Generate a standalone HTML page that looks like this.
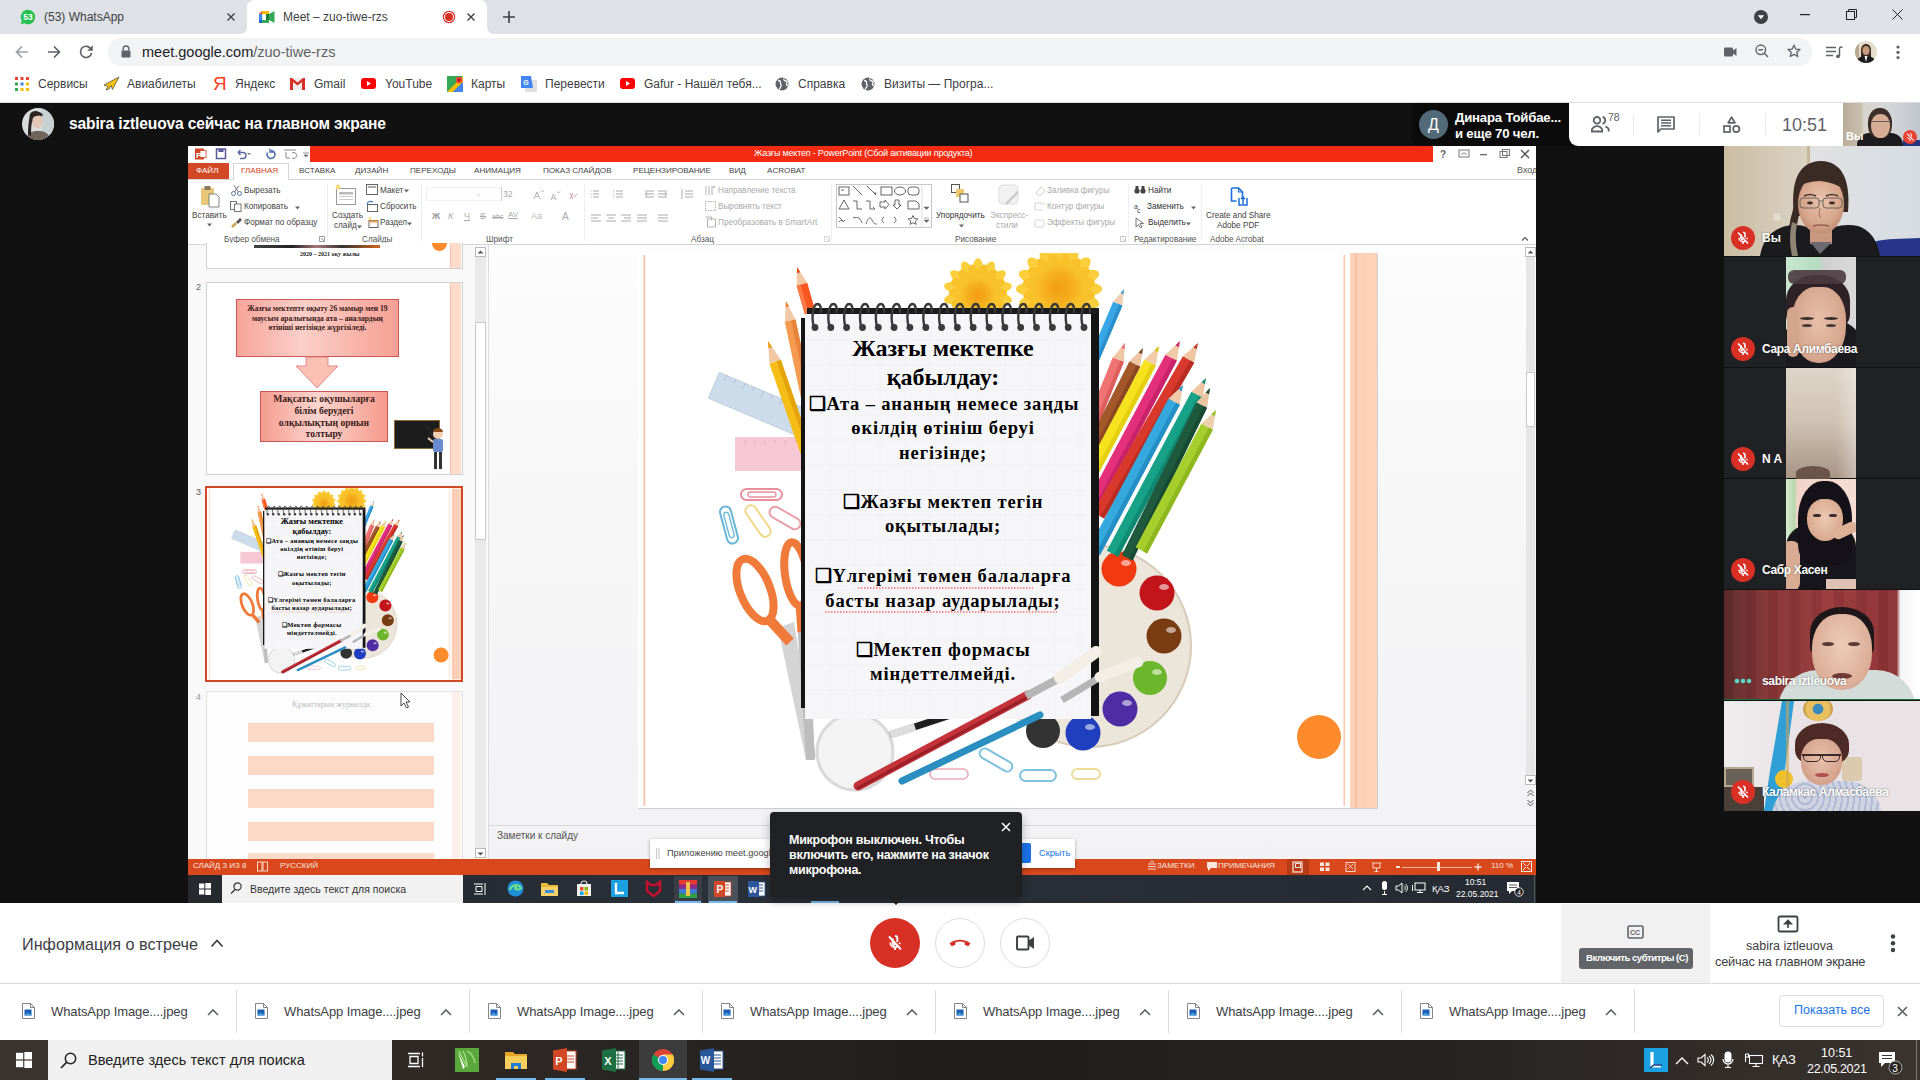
<!DOCTYPE html>
<html><head><meta charset="utf-8">
<style>
*{box-sizing:border-box;margin:0;padding:0}
html,body{width:1920px;height:1080px;overflow:hidden;background:#fff;font-family:"Liberation Sans",sans-serif}
.a{position:absolute}
.t{position:absolute;white-space:nowrap;line-height:1}
svg{position:absolute;overflow:visible}
</style></head><body>


<!-- ===== CHROME TAB BAR ===== -->
<div class="a" style="left:0;top:0;width:1920px;height:34px;background:#dee1e6"></div>
<!-- whatsapp tab -->
<svg style="left:20px;top:9px" width="16" height="16" viewBox="0 0 16 16"><path d="M8 0.8a7.2 7.2 0 0 0-6.2 10.9L0.8 15.2l3.6-1a7.2 7.2 0 1 0 3.6-13.4z" fill="#25c14f"/><text x="8" y="11.3" font-size="8.5" font-weight="bold" fill="#fff" text-anchor="middle" font-family="Liberation Sans">53</text></svg>
<div class="t" style="left:44px;top:11px;font-size:12px;color:#3c4043">(53) WhatsApp</div>
<svg style="left:227px;top:13px" width="8" height="8"><path d="M0.5 0.5L7.5 7.5M7.5 0.5L0.5 7.5" stroke="#3c4043" stroke-width="1.4"/></svg>
<!-- active tab -->
<svg style="left:239px;top:0px" width="256" height="34"><path d="M0 34 Q8 34 8 26 L8 8 Q8 0 16 0 L240 0 Q248 0 248 8 L248 26 Q248 34 256 34 Z" fill="#fff"/></svg>
<svg style="left:259px;top:11px" width="16" height="12" viewBox="0 0 16 12"><rect x="0" y="3" width="3.2" height="6" fill="#1e8e3e"/><path d="M3 0h7v3H3z" fill="#fbbc04"/><path d="M0 3L3 0v3z" fill="#ea4335"/><path d="M0 9v1.5A1.5 1.5 0 0 0 1.5 12H10V9z" fill="#1967d2"/><rect x="0" y="3" width="3" height="6" fill="#4285f4"/><path d="M10 0v12l0 0 0-12z" fill="#34a853"/><rect x="7" y="3" width="3" height="6" fill="#188038"/><path d="M10 3L15.5 0v12L10 9z" fill="#34a853"/><rect x="3" y="9" width="7" height="3" fill="#34a853"/><rect x="0" y="9" width="3" height="3" fill="#1967d2"/></svg>
<div class="t" style="left:283px;top:11px;font-size:12px;color:#3c4043">Meet – zuo-tiwe-rzs</div>
<svg style="left:442px;top:10px" width="14" height="14"><circle cx="7" cy="7" r="5.6" fill="#fff" stroke="#d93025" stroke-width="1.2"/><circle cx="7" cy="7" r="4" fill="#d93025"/></svg>
<svg style="left:467px;top:13px" width="8" height="8"><path d="M0.5 0.5L7.5 7.5M7.5 0.5L0.5 7.5" stroke="#3c4043" stroke-width="1.4"/></svg>
<svg style="left:503px;top:11px" width="12" height="12"><path d="M6 0v12M0 6h12" stroke="#3c4043" stroke-width="1.6"/></svg>
<!-- window controls -->
<svg style="left:1754px;top:10px" width="14" height="14"><circle cx="7" cy="7" r="7" fill="#3c4043"/><path d="M3.8 5.2h6.4L7 9.2z" fill="#fff"/></svg>
<svg style="left:1800px;top:14px" width="10" height="2"><rect width="10" height="1.2" fill="#202124"/></svg>
<svg style="left:1846px;top:9px" width="11" height="11"><rect x="0.5" y="2.5" width="8" height="8" fill="none" stroke="#202124" stroke-width="1"/><path d="M2.5 2.5V0.5h8v8h-2" fill="none" stroke="#202124" stroke-width="1"/></svg>
<svg style="left:1892px;top:9px" width="11" height="11"><path d="M0.5 0.5L10.5 10.5M10.5 0.5L0.5 10.5" stroke="#202124" stroke-width="1"/></svg>
<!-- ===== TOOLBAR ===== -->
<div class="a" style="left:0;top:34px;width:1920px;height:69px;background:#fff"></div>
<svg style="left:15px;top:45px" width="14" height="14"><path d="M13 7H2M7 1.5L1.5 7L7 12.5" fill="none" stroke="#9aa0a6" stroke-width="1.7"/></svg>
<svg style="left:47px;top:45px" width="14" height="14"><path d="M1 7h11M7 1.5L12.5 7L7 12.5" fill="none" stroke="#5f6368" stroke-width="1.7"/></svg>
<svg style="left:79px;top:44px" width="15" height="15" viewBox="0 0 15 15"><path d="M12.2 5.5A5.6 5.6 0 1 0 12.6 9" fill="none" stroke="#5f6368" stroke-width="1.7"/><path d="M13.8 1.2v5.6H8.2z" fill="#5f6368"/></svg>
<div class="a" style="left:108px;top:38px;width:1704px;height:28px;border-radius:14px;background:#f1f3f4"></div>
<svg style="left:121px;top:45px" width="10" height="13"><path d="M2.2 5.5V3.8a2.8 2.8 0 0 1 5.6 0V5.5" fill="none" stroke="#5f6368" stroke-width="1.4"/><rect x="0.5" y="5.5" width="9" height="7" rx="1" fill="#5f6368"/></svg>
<div class="t" style="left:142px;top:45px;font-size:14.5px;color:#202124">meet.google.com<span style="color:#5f6368">/zuo-tiwe-rzs</span></div>
<svg style="left:1724px;top:47px" width="13" height="10"><rect x="0" y="0.5" width="9" height="9" rx="1" fill="#5f6368"/><path d="M9 3.5l3.5-2.5v8L9 6.5z" fill="#5f6368"/></svg>
<svg style="left:1755px;top:44px" width="14" height="14"><circle cx="5.8" cy="5.8" r="4.8" fill="none" stroke="#5f6368" stroke-width="1.4"/><path d="M3.4 5.8h4.8M9.3 9.3l3.7 3.7" stroke="#5f6368" stroke-width="1.4"/></svg>
<svg style="left:1787px;top:44px" width="14" height="14" viewBox="0 0 14 14"><path d="M7 1.2l1.75 3.9 4.25.4-3.2 2.85.95 4.15L7 10.35 3.25 12.5l.95-4.15L1 5.5l4.25-.4z" fill="none" stroke="#5f6368" stroke-width="1.3" stroke-linejoin="round"/></svg>
<svg style="left:1826px;top:46px" width="17" height="13"><path d="M0 1.5h10M0 5.5h10M0 9.5h7" stroke="#5f6368" stroke-width="1.5"/><path d="M13.5 1.5V10" stroke="#5f6368" stroke-width="1.5"/><path d="M13.5 1.2h3" stroke="#5f6368" stroke-width="1.5"/><circle cx="12" cy="10.3" r="1.9" fill="#5f6368"/></svg>
<svg style="left:1855px;top:41px" width="22" height="22" viewBox="0 0 22 22"><defs><clipPath id="avc"><circle cx="11" cy="11" r="11"/></clipPath></defs><g clip-path="url(#avc)"><rect width="22" height="22" fill="#e6dccb"/><rect x="0" y="0" width="4" height="22" fill="#b8a890"/><path d="M6 10c0-5 2-7 5-7s5 2 5 7v8H6z" fill="#3a2c24"/><ellipse cx="11" cy="9.5" rx="3.6" ry="4.6" fill="#c99a80"/><path d="M2 22c0-5 3-7 9-7s9 2 9 7z" fill="#1c1c1e"/><path d="M9.5 15l1.5 6 1.5-6z" fill="#f4f4f4"/></g></svg>
<svg style="left:1896px;top:45px" width="4" height="15"><circle cx="2" cy="2" r="1.6" fill="#5f6368"/><circle cx="2" cy="7.3" r="1.6" fill="#5f6368"/><circle cx="2" cy="12.6" r="1.6" fill="#5f6368"/></svg>
<!-- bookmarks -->
<svg style="left:15px;top:77px" width="14" height="14"><g><rect x="0" y="0" width="3" height="3" fill="#ea4335"/><rect x="5.5" y="0" width="3" height="3" fill="#ea4335"/><rect x="11" y="0" width="3" height="3" fill="#ea4335"/><rect x="0" y="5.5" width="3" height="3" fill="#34a853"/><rect x="5.5" y="5.5" width="3" height="3" fill="#4285f4"/><rect x="11" y="5.5" width="3" height="3" fill="#fbbc04"/><rect x="0" y="11" width="3" height="3" fill="#34a853"/><rect x="5.5" y="11" width="3" height="3" fill="#fbbc04"/><rect x="11" y="11" width="3" height="3" fill="#fbbc04"/></g></svg>
<div class="t" style="left:38px;top:78px;font-size:12px;color:#3c4043">Сервисы</div>
<svg style="left:103px;top:76px" width="17" height="16" viewBox="0 0 17 16"><path d="M16 1L1 9l4 1.5L3 14l3-1 2-3.5 1.5 4z" fill="#f4c20d" stroke="#555" stroke-width="0.8"/></svg>
<div class="t" style="left:127px;top:78px;font-size:12px;color:#3c4043">Авиабилеты</div>
<div class="t" style="left:213px;top:74px;font-size:19px;color:#fc3f1d">Я</div>
<div class="t" style="left:235px;top:78px;font-size:12px;color:#3c4043">Яндекс</div>
<svg style="left:290px;top:78px" width="15" height="12"><rect x="0" y="0" width="15" height="12" fill="#eee"/><path d="M0 0v12h3V4l4.5 3.5L12 4v8h3V0h-2L7.5 4.5 2 0z" fill="#d93025"/></svg>
<div class="t" style="left:314px;top:78px;font-size:12px;color:#3c4043">Gmail</div>
<svg style="left:361px;top:78px" width="15" height="11"><rect width="15" height="11" rx="3" fill="#ff0000"/><path d="M6 3l4 2.5L6 8z" fill="#fff"/></svg>
<div class="t" style="left:385px;top:78px;font-size:12px;color:#3c4043">YouTube</div>
<svg style="left:447px;top:76px" width="16" height="16"><path d="M0 0h16v16H0z" fill="#34a853"/><path d="M0 16L16 0v6L6 16z" fill="#fbbc04"/><path d="M6 16L16 6v10z" fill="#4285f4"/><circle cx="12" cy="4" r="3.2" fill="#ea4335"/><circle cx="12" cy="4" r="1.2" fill="#a50e0e"/></svg>
<div class="t" style="left:471px;top:78px;font-size:12px;color:#3c4043">Карты</div>
<svg style="left:521px;top:76px" width="17" height="16"><rect x="4" y="4" width="12" height="12" fill="#e0e0e0"/><path d="M0 0h10l2 12H0z" fill="#4285f4"/><text x="5" y="8.5" font-size="7" fill="#fff" text-anchor="middle" font-weight="bold" font-family="Liberation Sans">G</text></svg>
<div class="t" style="left:545px;top:78px;font-size:12px;color:#3c4043">Перевести</div>
<svg style="left:620px;top:78px" width="15" height="11"><rect width="15" height="11" rx="3" fill="#ff0000"/><path d="M6 3l4 2.5L6 8z" fill="#fff"/></svg>
<div class="t" style="left:644px;top:78px;font-size:12px;color:#3c4043">Gafur - Нашёл тебя...</div>
<svg style="left:775px;top:77px" width="14" height="14"><circle cx="7" cy="7" r="6.5" fill="#5f6368"/><path d="M3 3.5c2 0 3 1 2.5 2.5S7 8 6 9.5 4 12 4.5 12.5M9 1.5c-.5 1.5.5 2.5 2 2.5s1 2 .5 3 1 1.5 1.5 1" stroke="#fff" stroke-width="1.3" fill="none"/></svg>
<div class="t" style="left:798px;top:78px;font-size:12px;color:#3c4043">Справка</div>
<svg style="left:861px;top:77px" width="14" height="14"><circle cx="7" cy="7" r="6.5" fill="#5f6368"/><path d="M3 3.5c2 0 3 1 2.5 2.5S7 8 6 9.5 4 12 4.5 12.5M9 1.5c-.5 1.5.5 2.5 2 2.5s1 2 .5 3 1 1.5 1.5 1" stroke="#fff" stroke-width="1.3" fill="none"/></svg>
<div class="t" style="left:884px;top:78px;font-size:12px;color:#3c4043">Визиты — Програ...</div>

<!-- ===== MEET DARK ===== -->
<div class="a" style="left:0;top:103px;width:1920px;height:800px;background:#111111"></div>
<div class="a" style="left:0;top:102px;width:1920px;height:1px;background:#dadce0"></div>
<!-- meet header -->
<svg style="left:22px;top:108px" width="32" height="32" viewBox="0 0 32 32"><defs><clipPath id="avm"><circle cx="16" cy="16" r="16"/></clipPath></defs><g clip-path="url(#avm)"><rect width="32" height="32" fill="#d8dcdc"/><rect x="20" width="12" height="32" fill="#c6d2d2"/><path d="M4 32c1-7 5-9 12-9s11 2 12 9z" fill="#6e6458"/><path d="M8 6c2-4 9-4 11 0 1 4 0 6-1 8H10c-1 4-1 10-1 14l-3-1c0-8 1-16 2-21z" fill="#2a2422"/><ellipse cx="15.5" cy="13.5" rx="5.2" ry="7" fill="#e4c6b6"/><path d="M9 10c1-4 4-6 7-6s5 2 5 4c-4-1-8 0-12 2z" fill="#2a2422"/></g></svg>
<div class="t" style="left:69px;top:116px;font-size:15.6px;color:#fff;font-weight:bold;letter-spacing:-0.15px">sabira iztleuova сейчас на главном экране</div>
<div class="a" style="left:1412px;top:103px;width:170px;height:43px;background:#0b0b0b;border-bottom-left-radius:8px"></div>
<div class="a" style="left:1419px;top:110px;width:29px;height:29px;border-radius:50%;background:#526978"></div>
<div class="t" style="left:1426px;top:117px;font-size:16px;color:#fff;width:15px;text-align:center">Д</div>
<div class="t" style="left:1455px;top:111px;font-size:13.2px;color:#fff;font-weight:bold;letter-spacing:-0.2px">Динара Тойбае...</div>
<div class="t" style="left:1455px;top:127px;font-size:13.2px;color:#fff;font-weight:bold;letter-spacing:-0.2px">и еще 70 чел.</div>
<div class="a" style="left:1569px;top:103px;width:274px;height:43px;background:#fff;border-bottom-left-radius:9px"></div>
<svg style="left:1591px;top:116px" width="22" height="17" viewBox="0 0 22 17"><circle cx="6" cy="4.3" r="3.3" fill="none" stroke="#5f6368" stroke-width="1.8"/><path d="M0.9 15.5v-1.8c0-2 3-3.6 5.1-3.6s5.2 1.6 5.2 3.6v1.8z" fill="none" stroke="#5f6368" stroke-width="1.8"/><path d="M11.5 0.8a3.6 3.6 0 0 1 0 7" fill="none" stroke="#5f6368" stroke-width="1.8"/><path d="M14.5 10.6c1.6.6 3.2 1.7 3.2 3.2v1.8" fill="none" stroke="#5f6368" stroke-width="1.8"/></svg>
<div class="t" style="left:1608px;top:112px;font-size:10.5px;color:#5f6368">78</div>
<div class="a" style="left:1633px;top:114px;width:1px;height:21px;background:#e8eaed"></div>
<svg style="left:1657px;top:116px" width="18" height="17" viewBox="0 0 18 17"><path d="M1 1h16v12H4l-3 3z" fill="none" stroke="#5f6368" stroke-width="1.7" stroke-linejoin="round"/><path d="M4 4.3h10M4 7h10M4 9.7h10" stroke="#5f6368" stroke-width="1.5"/></svg>
<div class="a" style="left:1699px;top:114px;width:1px;height:21px;background:#e8eaed"></div>
<svg style="left:1723px;top:116px" width="18" height="17" viewBox="0 0 18 17"><path d="M8.6 1.2L12 6.8H5.2z" fill="none" stroke="#5f6368" stroke-width="1.7" stroke-linejoin="round"/><rect x="1" y="10" width="6" height="6" fill="none" stroke="#5f6368" stroke-width="1.7"/><circle cx="13.3" cy="13" r="3.1" fill="none" stroke="#5f6368" stroke-width="1.7"/></svg>
<div class="a" style="left:1765px;top:114px;width:1px;height:21px;background:#e8eaed"></div>
<div class="t" style="left:1782px;top:116px;font-size:18px;color:#5f6368">10:51</div>
<div class="a" id="selfsmall" style="left:1843px;top:103px;width:77px;height:43px;overflow:hidden;background:linear-gradient(90deg,#b9ad98 0%,#c9c0ae 25%,#d8d4cc 26%,#d6d6d8 60%,#c0c6ce 100%)">
 <div class="a" style="left:14px;top:30px;width:46px;height:16px;border-radius:12px 12px 0 0;background:#1c1c1e"></div>
 <div class="a" style="left:60px;top:37px;width:20px;height:8px;background:#26337e"></div>
 <div class="a" style="left:25px;top:5px;width:24px;height:30px;border-radius:48% 48% 40% 40%;background:#3b2e26"></div>
 <div class="a" style="left:28px;top:11px;width:19px;height:24px;border-radius:45% 45% 48% 48%;background:#d7ad95"></div>
 <div class="a" style="left:28px;top:18px;width:19px;height:1px;background:#6a5a54"></div>
</div>
<div class="t" style="left:1846px;top:131px;font-size:11px;color:#fff;font-weight:bold">Вы</div>
<svg style="left:1903px;top:130px" width="14" height="14"><circle cx="7" cy="7" r="7" fill="#ea4335"/><path d="M4 3.5l6.5 7" stroke="#fff" stroke-width="1.1"/><path d="M7 3.3a1.3 1.3 0 0 1 1.3 1.3v2M5.7 6V4.6M4.7 7a2.3 2.3 0 0 0 4 1.3M7 9.5v1.5" stroke="#fff" stroke-width="1" fill="none"/></svg>

<!-- ===== SHARED SCREEN (PowerPoint) ===== -->
<div class="a" style="left:0;top:0;width:1920px;height:1080px;clip-path:inset(146px 384px 177px 188px)">
<div class="a" style="left:188px;top:146px;width:1348px;height:757px;background:#fff"></div>
<!-- title bar -->
<div class="a" style="left:310px;top:146px;width:1123px;height:16px;background:#f42b12"></div>
<div class="t" style="left:754px;top:149px;font-size:9px;color:#fff;letter-spacing:-0.2px">Жазғы мектеп -  PowerPoint (Сбой активации продукта)</div>
<svg style="left:194px;top:147px" width="120" height="14" viewBox="0 0 120 14">
 <rect x="1" y="1.5" width="9" height="11" fill="#d24726"/><rect x="6" y="3.5" width="6" height="7" fill="#fff" stroke="#d24726" stroke-width="0.8"/><text x="2" y="10.5" font-size="8" fill="#fff" font-weight="bold" font-family="Liberation Sans">P</text>
 <rect x="22.5" y="2" width="9" height="9.5" fill="none" stroke="#5a5a9a" stroke-width="1.5"/><rect x="24.5" y="2" width="5" height="3" fill="#5a5a9a"/>
 <path d="M44 5.5h5a3 3 0 0 1 0 6h-3M44 5.5l2.5-2.5M44 5.5l2.5 2.5" fill="none" stroke="#5a6aa0" stroke-width="1.4"/><path d="M53 6l2 2 2-2z" fill="#777"/>
 <path d="M77 3.5a4 4 0 1 1-3.5 2" fill="none" stroke="#4a6ab0" stroke-width="1.5"/><path d="M76 1.5v3.5h3.5" fill="none" stroke="#4a6ab0" stroke-width="1.3"/>
 <path d="M90 3h12M92 5v6h4M98 6a3 3 0 1 1 0 5" fill="none" stroke="#888" stroke-width="1"/>
 <path d="M109 6h6M110 8l2 2 2-2z" fill="#777" stroke="#777" stroke-width="0.8"/>
</svg>
<svg style="left:1438px;top:148px" width="95" height="12" viewBox="0 0 95 12">
 <text x="2" y="9.5" font-size="10" fill="#666" font-family="Liberation Sans" font-weight="bold">?</text>
 <rect x="21" y="2" width="10" height="7" fill="none" stroke="#777" stroke-width="1"/><path d="M23.5 7l2.5-2.5L28.5 7" fill="none" stroke="#777"/>
 <rect x="42" y="6" width="7" height="1.3" fill="#666"/>
 <rect x="62" y="3.5" width="7" height="6" fill="none" stroke="#777"/><rect x="64.5" y="1.5" width="7" height="6" fill="none" stroke="#777"/>
 <path d="M83 2l8 8M91 2l-8 8" stroke="#555" stroke-width="1.4"/>
</svg>
<!-- tabs row -->
<div class="a" style="left:188px;top:179px;width:1348px;height:1px;background:#d6d6d6"></div>
<div class="a" style="left:188px;top:163px;width:41px;height:16px;background:#d24726"></div>
<div class="t" style="left:196px;top:167px;font-size:8.1px;color:#fff">ФАЙЛ</div>
<div class="a" style="left:233px;top:163px;width:56px;height:17px;background:#fff;border:1px solid #d6d6d6;border-bottom:none"></div>
<div class="t" style="left:241px;top:167px;font-size:8.1px;color:#d24726">ГЛАВНАЯ</div>
<div class="t" style="left:299px;top:167px;font-size:8.1px;color:#444">ВСТАВКА</div>
<div class="t" style="left:355px;top:167px;font-size:8.1px;color:#444">ДИЗАЙН</div>
<div class="t" style="left:410px;top:167px;font-size:8.1px;color:#444">ПЕРЕХОДЫ</div>
<div class="t" style="left:474px;top:167px;font-size:8.1px;color:#444">АНИМАЦИЯ</div>
<div class="t" style="left:543px;top:167px;font-size:8.1px;color:#444">ПОКАЗ СЛАЙДОВ</div>
<div class="t" style="left:633px;top:167px;font-size:8.1px;color:#444">РЕЦЕНЗИРОВАНИЕ</div>
<div class="t" style="left:729px;top:167px;font-size:8.1px;color:#444">ВИД</div>
<div class="t" style="left:767px;top:167px;font-size:8.1px;color:#444">ACROBAT</div>
<div class="t" style="left:1517px;top:166px;font-size:9px;color:#555">Вход</div>
<!-- ribbon -->
<div class="a" style="left:188px;top:244px;width:1348px;height:1px;background:#d4d4d4"></div>
<!-- Clipboard group -->
<svg style="left:199px;top:185px" width="24" height="24" viewBox="0 0 24 24"><rect x="2" y="3" width="13" height="17" rx="1" fill="#e8c878"/><rect x="5.5" y="1" width="6" height="4" fill="#8a7a5a"/><path d="M10 9h7l3 3v10H10z" fill="#fff" stroke="#666" stroke-width="0.8"/></svg>
<div class="t" style="left:192px;top:212px;font-size:8.2px;color:#444">Вставить</div>
<svg style="left:207px;top:223px" width="5" height="4"><path d="M0 0.5h5L2.5 3.5z" fill="#666"/></svg>
<svg style="left:231px;top:185px" width="11" height="11"><circle cx="2.5" cy="8.5" r="2" fill="none" stroke="#5577aa" stroke-width="1"/><circle cx="8.5" cy="8.5" r="2" fill="none" stroke="#5577aa" stroke-width="1"/><path d="M3.5 7L8 0.5M7.5 7L3 0.5" stroke="#666" stroke-width="0.9"/></svg>
<div class="t" style="left:244px;top:187px;font-size:8.2px;color:#444">Вырезать</div>
<svg style="left:230px;top:201px" width="12" height="11"><rect x="0.5" y="0.5" width="6" height="8" fill="#fff" stroke="#666" stroke-width="0.9"/><rect x="4.5" y="3" width="6.5" height="7.5" fill="#fff" stroke="#666" stroke-width="0.9"/></svg>
<div class="t" style="left:244px;top:203px;font-size:8.2px;color:#444">Копировать</div>
<svg style="left:295px;top:206px" width="5" height="4"><path d="M0 0.5h5L2.5 3.5z" fill="#666"/></svg>
<svg style="left:231px;top:217px" width="11" height="11"><path d="M1 10l4-4" stroke="#c9a64a" stroke-width="2.5"/><path d="M5 5l4-4 2 2-4 4z" fill="#555"/></svg>
<div class="t" style="left:244px;top:219px;font-size:8.2px;color:#444">Формат по образцу</div>
<div class="t" style="left:224px;top:236px;font-size:8.2px;color:#555">Буфер обмена</div>
<svg style="left:319px;top:236px" width="6" height="6"><path d="M0.5 0.5h5v5h-5z M2 2l3 3" fill="none" stroke="#888" stroke-width="0.8"/></svg>
<div class="a" style="left:327px;top:184px;width:1px;height:57px;background:#ececec"></div>
<!-- Slides group -->
<svg style="left:334px;top:184px" width="24" height="22"><rect x="2.5" y="4.5" width="19" height="16" fill="#fff" stroke="#999" stroke-width="1"/><rect x="5" y="8" width="14" height="2.5" fill="#bbb"/><rect x="5" y="12" width="14" height="1" fill="#ccc"/><rect x="5" y="15" width="14" height="1" fill="#ccc"/><circle cx="4" cy="3" r="2.5" fill="#f7dc80"/></svg>
<div class="t" style="left:332px;top:212px;font-size:8.2px;color:#444">Создать</div>
<div class="t" style="left:334px;top:222px;font-size:8.2px;color:#444">слайд</div>
<svg style="left:357px;top:225px" width="5" height="4"><path d="M0 0.5h5L2.5 3.5z" fill="#666"/></svg>
<svg style="left:366px;top:184px" width="12" height="11"><rect x="0.5" y="0.5" width="11" height="10" fill="#fff" stroke="#666" stroke-width="1"/><rect x="2" y="2" width="8" height="2" fill="#aaa"/></svg>
<div class="t" style="left:380px;top:187px;font-size:8.2px;color:#444">Макет</div>
<svg style="left:404px;top:189px" width="5" height="4"><path d="M0 0.5h5L2.5 3.5z" fill="#666"/></svg>
<svg style="left:366px;top:201px" width="12" height="11"><rect x="1.5" y="3.5" width="10" height="7" fill="#fff" stroke="#666" stroke-width="1"/><path d="M1 3a4 4 0 0 1 6-2" fill="none" stroke="#3a7acc" stroke-width="1.2"/></svg>
<div class="t" style="left:380px;top:203px;font-size:8.2px;color:#444">Сбросить</div>
<svg style="left:368px;top:217px" width="11" height="11"><rect x="1" y="3.5" width="9" height="7" fill="#fff" stroke="#666" stroke-width="1"/><rect x="1" y="3.5" width="9" height="2" fill="#f0a060"/><circle cx="2" cy="1.5" r="1.5" fill="#f7dc80"/></svg>
<div class="t" style="left:380px;top:219px;font-size:8.2px;color:#444">Раздел</div>
<svg style="left:407px;top:222px" width="5" height="4"><path d="M0 0.5h5L2.5 3.5z" fill="#666"/></svg>
<div class="t" style="left:362px;top:236px;font-size:8.2px;color:#555">Слайды</div>
<div class="a" style="left:421px;top:184px;width:1px;height:57px;background:#ececec"></div>
<!-- Font group (greyed) -->
<div class="a" style="left:426px;top:187px;width:76px;height:14px;border:1px solid #f0f0f0;background:#fdfdfd"></div>
<div class="a" style="left:501px;top:187px;width:22px;height:14px;border-left:1px solid #ccc"></div>
<div class="t" style="left:503px;top:190px;font-size:8.5px;color:#aaa">32</div>
<svg style="left:474px;top:190px" width="120" height="12" viewBox="0 0 120 12"><path d="M3 5h3" stroke="#ccc"/><path d="M60 9l3-7 3 7M61.5 6.5h3M67 2l1.5-1.5L70 2" fill="none" stroke="#aaa" stroke-width="0.9"/><path d="M77 10l2.5-6 2.5 6M78 8h3M83 1.5l1.5 1.5 1.5-1.5" fill="none" stroke="#aaa" stroke-width="0.9"/><path d="M96 3l3 6M99 3l-3 6M100 7l3-3" fill="none" stroke="#c9a" stroke-width="1"/></svg>
<div class="t" style="left:432px;top:212px;font-size:9px;color:#999;font-weight:bold">Ж</div>
<div class="t" style="left:448px;top:212px;font-size:9px;color:#aaa;font-style:italic">К</div>
<div class="t" style="left:464px;top:212px;font-size:9px;color:#aaa;text-decoration:underline">Ч</div>
<div class="t" style="left:480px;top:212px;font-size:9px;color:#aaa;text-decoration:line-through">S</div>
<div class="t" style="left:492px;top:213px;font-size:7px;color:#aaa;text-decoration:line-through">abc</div>
<div class="t" style="left:508px;top:211px;font-size:8px;color:#aaa;text-decoration:underline">AV</div>
<div class="t" style="left:531px;top:212px;font-size:9px;color:#bbb">Aa</div>
<div class="t" style="left:562px;top:212px;font-size:10px;color:#aaa">A</div>
<div class="t" style="left:486px;top:236px;font-size:8.2px;color:#555">Шрифт</div>
<div class="a" style="left:584px;top:184px;width:1px;height:57px;background:#efefef"></div>
<!-- Paragraph -->
<svg style="left:590px;top:188px" width="240" height="42" viewBox="0 0 240 42">
 <g stroke="#aaa" stroke-width="1" fill="none">
 <path d="M3 3h6M3 6h6M3 9h6M0.5 3h1M0.5 6h1M0.5 9h1"/><path d="M26 3h7M26 6h7M26 9h7"/><path d="M23 3h1M23 6h1M23 9h1"/>
 <path d="M55 3h9M58 6h6M55 9h9M55 6l2-1.5v3z"/><path d="M68 3h9M68 6h6M68 9h9M77 6l-2-1.5v3z"/>
 <path d="M95 3h8M95 6h8M95 9h8M92 1v10"/>
 <path d="M1 27h10M1 30h7M1 33h10"/><path d="M16 27h10M18 30h6M16 33h10"/><path d="M31 27h10M34 30h7M31 33h10"/><path d="M47 27h10M47 30h10M47 33h10"/>
 <path d="M68 27h10M68 30h10M68 33h10"/>
 </g>
</svg>
<div class="t" style="left:691px;top:236px;font-size:8.2px;color:#555">Абзац</div>
<svg style="left:705px;top:185px" width="12" height="44"><g fill="none" stroke="#aaa" stroke-width="0.9"><path d="M1 1v9M4 1v9M7 1v9M10 3l-1-2-1 2"/><rect x="0.5" y="16.5" width="10" height="9" stroke-dasharray="1.5 1"/><rect x="2.5" y="34" width="8" height="8"/><path d="M0.5 32h6v3"/></g></svg>
<div class="t" style="left:718px;top:187px;font-size:8.2px;color:#aaa">Направление текста</div>
<div class="t" style="left:718px;top:203px;font-size:8.2px;color:#aaa">Выровнять текст</div>
<div class="t" style="left:718px;top:219px;font-size:8.2px;color:#aaa">Преобразовать в SmartArt</div>
<svg style="left:824px;top:236px" width="6" height="6"><path d="M0.5 0.5h5v5h-5z M2 2l3 3" fill="none" stroke="#ccc" stroke-width="0.8"/></svg>
<div class="a" style="left:831px;top:184px;width:1px;height:57px;background:#efefef"></div>
<!-- Drawing -->
<div class="a" style="left:836px;top:184px;width:96px;height:44px;border:1px solid #c6c6c6;background:#fff"></div>
<svg style="left:836px;top:184px" width="96" height="44" viewBox="0 0 96 44">
 <g fill="none" stroke="#555" stroke-width="0.9">
 <rect x="3" y="3" width="10" height="8"/><path d="M5 6h3"/>
 <path d="M17 2l9 9"/><path d="M31 2l9 9l-1-3"/>
 <rect x="45" y="3" width="11" height="8"/><ellipse cx="64" cy="7" rx="5.5" ry="4"/><rect x="72" y="3" width="11" height="8" rx="3"/>
 <path d="M3 25l5-9 5 9z"/><path d="M17 17h4v8h5"/><path d="M30 17h4v8h5l-2-2"/><path d="M44 18h5v-2l4 4.5-4 4.5v-2h-5z"/><path d="M59 16h4v5h2l-4 4-4-4h2z"/><path d="M72 17h8l3 3v5H72z"/>
 <path d="M3 38c2-4 4 2 6-2M3 33l4 4"/><path d="M17 34c5-2 8 1 9 5"/><path d="M30 40c2-6 4-8 6-4s3 4 5 4"/><path d="M48 33c-2 0-1 3-2 3s1 2 2 3"/><path d="M58 33c2 0 1 3 2 3s-1 2-2 3"/><path d="M77 31.5l1.5 3 3.3.4-2.4 2.2.7 3.3-3.1-1.7-3 1.7.7-3.3-2.5-2.2 3.3-.4z"/>
 </g>
 <path d="M86 0.5v43" stroke="#ddd"/><path d="M88 23l2.5 2.5L93 23z M88 36l2.5 2.5 2.5-2.5zM88 34h5" fill="#666" stroke="#666" stroke-width="0.5"/>
</svg>
<svg style="left:951px;top:184px" width="22" height="22"><rect x="0.5" y="0.5" width="8" height="8" fill="#fff" stroke="#555"/><rect x="5" y="5" width="8" height="8" fill="#f1c96a"/><rect x="9" y="10" width="8" height="8" fill="#fff" stroke="#555"/></svg>
<div class="t" style="left:936px;top:212px;font-size:8.2px;color:#333">Упорядочить</div>
<svg style="left:959px;top:224px" width="5" height="4"><path d="M0 0.5h5L2.5 3.5z" fill="#666"/></svg>
<svg style="left:998px;top:184px" width="24" height="24"><rect x="1" y="1" width="19" height="19" rx="4" fill="#f2f2f2" stroke="#ddd"/><path d="M8 20l12-12" stroke="#ccc" stroke-width="2.5"/></svg>
<div class="t" style="left:990px;top:212px;font-size:8.2px;color:#aaa">Экспресс-</div>
<div class="t" style="left:996px;top:222px;font-size:8.2px;color:#aaa">стили</div>
<svg style="left:1034px;top:185px" width="12" height="44"><g fill="none" stroke="#ccc" stroke-width="0.9"><path d="M2 8l5-6 4 4-5 5z"/><path d="M1 18h8l2 2M1 18v7h8"/><rect x="1" y="35" width="9" height="7" rx="1.5"/></g></svg>
<div class="t" style="left:1047px;top:187px;font-size:8.2px;color:#aaa">Заливка фигуры</div>
<div class="t" style="left:1047px;top:203px;font-size:8.2px;color:#aaa">Контур фигуры</div>
<div class="t" style="left:1047px;top:219px;font-size:8.2px;color:#aaa">Эффекты фигуры</div>
<div class="t" style="left:955px;top:236px;font-size:8.2px;color:#555">Рисование</div>
<svg style="left:1120px;top:236px" width="6" height="6"><path d="M0.5 0.5h5v5h-5z M2 2l3 3" fill="none" stroke="#bbb" stroke-width="0.8"/></svg>
<div class="a" style="left:1128px;top:184px;width:1px;height:57px;background:#efefef"></div>
<!-- Editing -->
<svg style="left:1134px;top:185px" width="12" height="44"><g fill="#444"><circle cx="3" cy="6" r="2.6"/><circle cx="9" cy="6" r="2.6"/><rect x="1.5" y="1" width="3" height="4"/><rect x="7.5" y="1" width="3" height="4"/></g><text x="0" y="24" font-size="7" fill="#444" font-family="Liberation Sans">a</text><text x="3" y="28" font-size="7" fill="#444" font-family="Liberation Sans">c</text><path d="M2 33v9l2.5-2.5 2 3.5 1.5-1-2-3.5h3.5z" fill="#fff" stroke="#555" stroke-width="0.8"/></svg>
<div class="t" style="left:1148px;top:187px;font-size:8.2px;color:#333">Найти</div>
<div class="t" style="left:1147px;top:203px;font-size:8.2px;color:#333">Заменить</div>
<svg style="left:1191px;top:206px" width="5" height="4"><path d="M0 0.5h5L2.5 3.5z" fill="#666"/></svg>
<div class="t" style="left:1148px;top:219px;font-size:8.2px;color:#333">Выделить</div>
<svg style="left:1186px;top:222px" width="5" height="4"><path d="M0 0.5h5L2.5 3.5z" fill="#666"/></svg>
<div class="t" style="left:1134px;top:236px;font-size:8.2px;color:#555">Редактирование</div>
<div class="a" style="left:1201px;top:184px;width:1px;height:57px;background:#efefef"></div>
<!-- Adobe -->
<svg style="left:1230px;top:187px" width="18" height="19" viewBox="0 0 18 19"><path d="M1.5 1h7l4 4v6M1.5 1v13h5" fill="none" stroke="#1f6fdb" stroke-width="1.6"/><path d="M8.5 1v4h4" fill="none" stroke="#1f6fdb" stroke-width="1.2"/><path d="M9 11v7h8v-7M13 17v-7M11 12l2-2 2 2" fill="none" stroke="#1f6fdb" stroke-width="1.5"/></svg>
<div class="t" style="left:1206px;top:212px;font-size:8.2px;color:#444">Create and Share</div>
<div class="t" style="left:1217px;top:222px;font-size:8.2px;color:#444">Adobe PDF</div>
<div class="t" style="left:1210px;top:236px;font-size:8.2px;color:#555">Adobe Acrobat</div>
<svg style="left:1521px;top:236px" width="8" height="5"><path d="M1 4.5l3-3 3 3" fill="none" stroke="#555" stroke-width="1.1"/></svg>
<!-- left thumbnails panel -->
<div class="a" style="left:188px;top:245px;width:300px;height:614px;background:#f9f9f9"></div>
<div class="a" style="left:488px;top:245px;width:1px;height:614px;background:#dcdcdc"></div>
<div class="a" style="left:475px;top:247px;width:11px;height:610px;background:#e9e9e9"></div>
<div class="a" style="left:475px;top:247px;width:11px;height:10px;background:#fff;border:1px solid #bbb"></div>
<svg style="left:477px;top:249px" width="7" height="6"><path d="M0.5 4.5L3.5 1.5 6.5 4.5z" fill="#555"/></svg>
<div class="a" style="left:475px;top:322px;width:11px;height:218px;background:#fff;border:1px solid #c8c8c8"></div>
<div class="a" style="left:475px;top:848px;width:11px;height:10px;background:#fff;border:1px solid #bbb"></div>
<svg style="left:477px;top:851px" width="7" height="6"><path d="M0.5 1.5L3.5 4.5 6.5 1.5z" fill="#555"/></svg>
<!-- slide 1 (partial) -->
<div class="a" style="left:206px;top:243px;width:257px;height:26px;background:#fff;border:1px solid #d0d0d0;border-top:none"></div>
<div class="a" style="left:254px;top:245px;width:126px;height:3px;background:linear-gradient(90deg,#444,#222 30%,#a77 50%,#333 70%,#d0661c)"></div>
<div class="a" style="left:432px;top:243px;width:15px;height:8px;border-radius:0 0 8px 8px;background:#fd8b2b"></div>
<div class="a" style="left:450px;top:243px;width:11px;height:25px;background:#fddccb;border-left:1px solid #f9c4a9"></div>
<div class="t" style="left:300px;top:251px;font-size:6px;color:#222;font-family:'Liberation Serif';font-weight:bold">2020 – 2021 оқу жылы</div>
<!-- slide 2 -->
<div class="t" style="left:196px;top:283px;font-size:9px;color:#666">2</div>
<div class="a" style="left:206px;top:282px;width:257px;height:193px;background:#fff;border:1px solid #d0d0d0"></div>
<div class="a" style="left:450px;top:283px;width:11px;height:191px;background:#fddccb;border-left:1px solid #f9c4a9"></div>
<div class="a" style="left:236px;top:299px;width:163px;height:58px;background:linear-gradient(90deg,#f7a49a,#fbd0c8 40%,#f7a094);border:1px solid #c55"></div>
<svg style="left:294px;top:357px" width="48" height="32"><path d="M12 0h22v9h10L23 31 2 9h10z" fill="#fbc0b4" stroke="#d77" stroke-width="0.8"/></svg>
<div class="a" style="left:260px;top:391px;width:128px;height:51px;background:linear-gradient(90deg,#f59c90,#fcd6ce 45%,#f69a8c);border:1px solid #c55"></div>
<div class="t" style="left:237px;top:304px;width:161px;text-align:center;font-size:7.6px;line-height:9.5px;color:#3a1a1a;font-family:'Liberation Serif';font-weight:bold;white-space:normal">Жазғы мектепте оқыту 26 мамыр мен 19<br>маусым аралығында ата – аналардың<br>өтініші негізінде жүргізіледі.</div>
<div class="t" style="left:262px;top:393px;width:124px;text-align:center;font-size:9.6px;line-height:11.8px;color:#3a1a1a;font-family:'Liberation Serif';font-weight:bold;white-space:normal">Мақсаты: оқушыларға<br>білім берудегі<br>олқылықтың орнын<br>толтыру</div>
<div class="a" style="left:394px;top:420px;width:46px;height:29px;background:#1d1d1d;border:1px solid #8a6a3a"></div>
<svg style="left:420px;top:420px" width="30" height="52"><path d="M5 5l10 14" stroke="#333" stroke-width="0.8"/><circle cx="18" cy="14" r="5" fill="#f3d1b0"/><path d="M13 12a5 4 0 0 1 10 0z" fill="#8a4a1a"/><rect x="13" y="19" width="10" height="13" rx="2" fill="#6a8ad0"/><path d="M13 22l-5-4" stroke="#f3d1b0" stroke-width="2"/><rect x="14" y="32" width="3" height="17" fill="#333"/><rect x="19" y="32" width="3" height="17" fill="#333"/></svg>
<!-- slide 3 (selected) -->
<div class="t" style="left:196px;top:488px;font-size:9px;color:#555">3</div>
<div class="a" style="left:205px;top:486px;width:258px;height:196px;border:2px solid #d24726;background:#fff"></div>
<svg style="left:207px;top:488px" width="254" height="192"><use href="#slide" width="254" height="192" preserveAspectRatio="none"/></svg>
<!-- slide 4 (faded) -->
<div class="t" style="left:196px;top:693px;font-size:9px;color:#999">4</div>
<div class="a" style="left:206px;top:691px;width:257px;height:170px;background:#fdfdfd;border:1px solid #e0e0e0"></div>
<div class="a" style="left:452px;top:692px;width:9px;height:167px;background:#fdf0ea"></div>
<div class="t" style="left:292px;top:701px;font-size:8px;color:#bbb;font-family:'Liberation Serif'">Құжаттарын журналда:</div>
<div class="a" style="left:248px;top:723px;width:186px;height:19px;background:#fbd9c6"></div>
<div class="a" style="left:248px;top:756px;width:186px;height:19px;background:#fbd9c6"></div>
<div class="a" style="left:248px;top:789px;width:186px;height:19px;background:#fbd9c6"></div>
<div class="a" style="left:248px;top:822px;width:186px;height:19px;background:#fbd9c6"></div>
<div class="a" style="left:248px;top:853px;width:186px;height:6px;background:#fbdcc8"></div>
<svg style="left:400px;top:692px" width="12" height="18"><path d="M1 1v13l3-3 2.5 5 2-1-2.5-5h4z" fill="#fff" stroke="#333" stroke-width="0.9"/></svg>
<!-- main editing area -->
<div class="a" style="left:489px;top:245px;width:1047px;height:614px;background:linear-gradient(#fdfdfe,#f7f7f8 40%,#f2f2f4)"></div>
<div class="a" style="left:489px;top:825px;width:1047px;height:1px;background:#d8d8d8"></div>
<div class="t" style="left:497px;top:831px;font-size:10px;color:#555">Заметки к слайду</div>
<div class="a" style="left:1526px;top:247px;width:9px;height:530px;background:#e6e6e6"></div>
<div class="a" style="left:1525px;top:775px;width:11px;height:10px;background:#fff;border:1px solid #bbb"></div>
<svg style="left:1527px;top:778px" width="7" height="6"><path d="M0.5 1.5L3.5 4.5 6.5 1.5z" fill="#555"/></svg>
<svg style="left:1527px;top:789px" width="7" height="18"><path d="M0.5 4L3.5 1 6.5 4M0.5 7L3.5 4 6.5 7M0.5 11L3.5 14 6.5 11M0.5 14L3.5 17 6.5 14" fill="none" stroke="#555" stroke-width="1"/></svg>
<div class="a" style="left:1525px;top:247px;width:11px;height:10px;background:#fff;border:1px solid #bbb"></div>
<svg style="left:1527px;top:249px" width="7" height="6"><path d="M0.5 4.5L3.5 1.5 6.5 4.5z" fill="#555"/></svg>
<div class="a" style="left:1526px;top:372px;width:9px;height:55px;background:#fff;border:1px solid #c8c8c8"></div>
<svg style="left:0;top:0" width="0" height="0">
<defs>
<symbol id="slide" viewBox="638 253 739 555">
 <rect x="638" y="253" width="739" height="555" fill="#fff"/>
 <rect x="643.5" y="255" width="1.8" height="551" fill="#f6c2ab"/>
 <rect x="1343.5" y="255" width="1.5" height="551" fill="#f9c4a9"/>
 <rect x="1350" y="253" width="27" height="555" fill="#fdd2b8"/>
 <rect x="1355" y="253" width="2" height="555" fill="#f9c2a6"/>
 <rect x="1363" y="253" width="1.5" height="555" fill="#fbcab2"/>
 <circle cx="1319" cy="737" r="22" fill="#fd8b2b"/>
 <!-- sunflowers -->
 <defs><radialGradient id="sfg"><stop offset="0" stop-color="#f29c12"/><stop offset="0.6" stop-color="#f6b21f"/><stop offset="1" stop-color="#f9c42c" stop-opacity="0"/></radialGradient></defs>
<g transform="translate(978 293)"><ellipse cx="0" cy="-21.1" rx="5.8" ry="13.6" fill="#fbcf3c" transform="rotate(0.0)"/><ellipse cx="0" cy="-21.1" rx="5.8" ry="13.6" fill="#fbcf3c" transform="rotate(25.7)"/><ellipse cx="0" cy="-21.1" rx="5.8" ry="13.6" fill="#fbcf3c" transform="rotate(51.4)"/><ellipse cx="0" cy="-21.1" rx="5.8" ry="13.6" fill="#fbcf3c" transform="rotate(77.1)"/><ellipse cx="0" cy="-21.1" rx="5.8" ry="13.6" fill="#fbcf3c" transform="rotate(102.9)"/><ellipse cx="0" cy="-21.1" rx="5.8" ry="13.6" fill="#fbcf3c" transform="rotate(128.6)"/><ellipse cx="0" cy="-21.1" rx="5.8" ry="13.6" fill="#fbcf3c" transform="rotate(154.3)"/><ellipse cx="0" cy="-21.1" rx="5.8" ry="13.6" fill="#fbcf3c" transform="rotate(180.0)"/><ellipse cx="0" cy="-21.1" rx="5.8" ry="13.6" fill="#fbcf3c" transform="rotate(205.7)"/><ellipse cx="0" cy="-21.1" rx="5.8" ry="13.6" fill="#fbcf3c" transform="rotate(231.4)"/><ellipse cx="0" cy="-21.1" rx="5.8" ry="13.6" fill="#fbcf3c" transform="rotate(257.1)"/><ellipse cx="0" cy="-21.1" rx="5.8" ry="13.6" fill="#fbcf3c" transform="rotate(282.9)"/><ellipse cx="0" cy="-21.1" rx="5.8" ry="13.6" fill="#fbcf3c" transform="rotate(308.6)"/><ellipse cx="0" cy="-21.1" rx="5.8" ry="13.6" fill="#fbcf3c" transform="rotate(334.3)"/><ellipse cx="0" cy="-17.0" rx="5.4" ry="12.2" fill="#f9c22a" transform="rotate(12.9)"/><ellipse cx="0" cy="-17.0" rx="5.4" ry="12.2" fill="#f9c22a" transform="rotate(38.6)"/><ellipse cx="0" cy="-17.0" rx="5.4" ry="12.2" fill="#f9c22a" transform="rotate(64.3)"/><ellipse cx="0" cy="-17.0" rx="5.4" ry="12.2" fill="#f9c22a" transform="rotate(90.0)"/><ellipse cx="0" cy="-17.0" rx="5.4" ry="12.2" fill="#f9c22a" transform="rotate(115.7)"/><ellipse cx="0" cy="-17.0" rx="5.4" ry="12.2" fill="#f9c22a" transform="rotate(141.4)"/><ellipse cx="0" cy="-17.0" rx="5.4" ry="12.2" fill="#f9c22a" transform="rotate(167.1)"/><ellipse cx="0" cy="-17.0" rx="5.4" ry="12.2" fill="#f9c22a" transform="rotate(192.9)"/><ellipse cx="0" cy="-17.0" rx="5.4" ry="12.2" fill="#f9c22a" transform="rotate(218.6)"/><ellipse cx="0" cy="-17.0" rx="5.4" ry="12.2" fill="#f9c22a" transform="rotate(244.3)"/><ellipse cx="0" cy="-17.0" rx="5.4" ry="12.2" fill="#f9c22a" transform="rotate(270.0)"/><ellipse cx="0" cy="-17.0" rx="5.4" ry="12.2" fill="#f9c22a" transform="rotate(295.7)"/><ellipse cx="0" cy="-17.0" rx="5.4" ry="12.2" fill="#f9c22a" transform="rotate(321.4)"/><ellipse cx="0" cy="-17.0" rx="5.4" ry="12.2" fill="#f9c22a" transform="rotate(347.1)"/></g><g transform="translate(1059 289) scale(0.92)"><ellipse cx="0" cy="-28.5" rx="7.8" ry="18.4" fill="#fbcf3c" transform="rotate(0.0)"/><ellipse cx="0" cy="-28.5" rx="7.8" ry="18.4" fill="#fbcf3c" transform="rotate(22.5)"/><ellipse cx="0" cy="-28.5" rx="7.8" ry="18.4" fill="#fbcf3c" transform="rotate(45.0)"/><ellipse cx="0" cy="-28.5" rx="7.8" ry="18.4" fill="#fbcf3c" transform="rotate(67.5)"/><ellipse cx="0" cy="-28.5" rx="7.8" ry="18.4" fill="#fbcf3c" transform="rotate(90.0)"/><ellipse cx="0" cy="-28.5" rx="7.8" ry="18.4" fill="#fbcf3c" transform="rotate(112.5)"/><ellipse cx="0" cy="-28.5" rx="7.8" ry="18.4" fill="#fbcf3c" transform="rotate(135.0)"/><ellipse cx="0" cy="-28.5" rx="7.8" ry="18.4" fill="#fbcf3c" transform="rotate(157.5)"/><ellipse cx="0" cy="-28.5" rx="7.8" ry="18.4" fill="#fbcf3c" transform="rotate(180.0)"/><ellipse cx="0" cy="-28.5" rx="7.8" ry="18.4" fill="#fbcf3c" transform="rotate(202.5)"/><ellipse cx="0" cy="-28.5" rx="7.8" ry="18.4" fill="#fbcf3c" transform="rotate(225.0)"/><ellipse cx="0" cy="-28.5" rx="7.8" ry="18.4" fill="#fbcf3c" transform="rotate(247.5)"/><ellipse cx="0" cy="-28.5" rx="7.8" ry="18.4" fill="#fbcf3c" transform="rotate(270.0)"/><ellipse cx="0" cy="-28.5" rx="7.8" ry="18.4" fill="#fbcf3c" transform="rotate(292.5)"/><ellipse cx="0" cy="-28.5" rx="7.8" ry="18.4" fill="#fbcf3c" transform="rotate(315.0)"/><ellipse cx="0" cy="-28.5" rx="7.8" ry="18.4" fill="#fbcf3c" transform="rotate(337.5)"/><ellipse cx="0" cy="-23.0" rx="7.4" ry="16.6" fill="#f9c22a" transform="rotate(11.2)"/><ellipse cx="0" cy="-23.0" rx="7.4" ry="16.6" fill="#f9c22a" transform="rotate(33.8)"/><ellipse cx="0" cy="-23.0" rx="7.4" ry="16.6" fill="#f9c22a" transform="rotate(56.2)"/><ellipse cx="0" cy="-23.0" rx="7.4" ry="16.6" fill="#f9c22a" transform="rotate(78.8)"/><ellipse cx="0" cy="-23.0" rx="7.4" ry="16.6" fill="#f9c22a" transform="rotate(101.2)"/><ellipse cx="0" cy="-23.0" rx="7.4" ry="16.6" fill="#f9c22a" transform="rotate(123.8)"/><ellipse cx="0" cy="-23.0" rx="7.4" ry="16.6" fill="#f9c22a" transform="rotate(146.2)"/><ellipse cx="0" cy="-23.0" rx="7.4" ry="16.6" fill="#f9c22a" transform="rotate(168.8)"/><ellipse cx="0" cy="-23.0" rx="7.4" ry="16.6" fill="#f9c22a" transform="rotate(191.2)"/><ellipse cx="0" cy="-23.0" rx="7.4" ry="16.6" fill="#f9c22a" transform="rotate(213.8)"/><ellipse cx="0" cy="-23.0" rx="7.4" ry="16.6" fill="#f9c22a" transform="rotate(236.2)"/><ellipse cx="0" cy="-23.0" rx="7.4" ry="16.6" fill="#f9c22a" transform="rotate(258.8)"/><ellipse cx="0" cy="-23.0" rx="7.4" ry="16.6" fill="#f9c22a" transform="rotate(281.2)"/><ellipse cx="0" cy="-23.0" rx="7.4" ry="16.6" fill="#f9c22a" transform="rotate(303.8)"/><ellipse cx="0" cy="-23.0" rx="7.4" ry="16.6" fill="#f9c22a" transform="rotate(326.2)"/><ellipse cx="0" cy="-23.0" rx="7.4" ry="16.6" fill="#f9c22a" transform="rotate(348.8)"/></g><circle cx="978" cy="295" r="20" fill="url(#sfg)"/><circle cx="1059" cy="288" r="28" fill="url(#sfg)"/>
 <!-- rulers -->
 <g transform="translate(758 404) rotate(23)"><rect x="-48" y="-14" width="96" height="28" fill="#cddcea" stroke="#b9cadb" stroke-width="0.8"/><path d="M-40-14v6M-30-14v4M-20-14v6M-10-14v4M0-14v6M10-14v4M20-14v6M30-14v4" stroke="#a9bccd" stroke-width="0.8"/></g>
 <rect x="735" y="437" width="72" height="34" fill="#f6c8d5"/>
 <path d="M745 440v5M755 440v3M765 440v5M775 440v3M785 440v5M795 440v3" stroke="#e3a9ba" stroke-width="0.8"/>
 <!-- paper clips -->
 <g fill="none" stroke-width="2">
  <rect x="741" y="489" width="41" height="11" rx="5.5" stroke="#e98f9c"/>
  <rect x="748" y="492" width="28" height="5" rx="2.5" stroke="#e98f9c" stroke-width="1.3"/>
  <g transform="translate(729 525) rotate(-15)"><rect x="-5.5" y="-19" width="11" height="38" rx="5.5" stroke="#68b6d8"/><rect x="-2.5" y="-13" width="5" height="26" rx="2.5" stroke="#68b6d8" stroke-width="1.3"/></g>
  <g transform="translate(758 521) rotate(-35)"><rect x="-5.5" y="-18" width="11" height="36" rx="5.5" stroke="#eed98a"/></g>
  <g transform="translate(785 518) rotate(30)"><rect x="-17" y="-5.5" width="34" height="11" rx="5.5" stroke="#e9a0a8"/></g>
  <g transform="translate(996 760) rotate(30)"><rect x="-18" y="-5" width="36" height="10" rx="5" stroke="#7cc2de"/></g>
  <rect x="1020" y="770" width="36" height="11" rx="5.5" stroke="#7cc2de"/>
  <rect x="1072" y="769" width="28" height="10" rx="5" stroke="#ecdc98"/>
  <rect x="930" y="769" width="38" height="10" rx="5" stroke="#eba8b8" stroke-width="1.6"/>
 </g>
 <!-- left pencils -->
 <g transform="translate(797 267) rotate(-16)"><path d="M0 0l-5.5 18h11z" fill="#f2c9a6"/><path d="M0 0l-1.8 6h3.6z" fill="#e84a1a"/><rect x="-5.5" y="18" width="11" height="60" fill="#f7561f"/><rect x="-5.5" y="18" width="4" height="60" fill="#ff7a45"/></g>
 <g transform="translate(786 301) rotate(-12)"><path d="M0 0l-5.5 20h11z" fill="#f2c9a6"/><path d="M0 0l-1.8 6h3.6z" fill="#e77c36"/><rect x="-5.5" y="20" width="11" height="100" fill="#f59a4f"/><rect x="1" y="20" width="4.5" height="100" fill="#e6843a"/></g>
 <g transform="translate(768 341) rotate(-19)"><path d="M0 0l-6 22h12z" fill="#f0c9a4"/><path d="M0 0l-2 7h4z" fill="#e7a21a"/><rect x="-6" y="22" width="12" height="100" fill="#f6bd16"/><rect x="1.5" y="22" width="4.5" height="100" fill="#e3a40e"/></g>
 <!-- scissors -->
 <g>
  <path d="M778 628L806 760L816 757L794 622z" fill="#d4d4d4"/>
  <path d="M797 618L806 760L815 760L808 612z" fill="#bdbdbd"/>
  <g transform="translate(755 590) rotate(-22)"><ellipse cx="0" cy="0" rx="15" ry="33" fill="none" stroke="#f07a3a" stroke-width="8"/></g>
  <path d="M768 618L790 642" stroke="#f07a3a" stroke-width="10"/>
  <g transform="translate(796 574) rotate(-8)"><ellipse cx="0" cy="0" rx="11" ry="32" fill="none" stroke="#f07a3a" stroke-width="8"/></g>
  <path d="M800 604L802 632" stroke="#f07a3a" stroke-width="9"/>
 </g>
 <!-- magnifier -->
 <circle cx="855" cy="752" r="38" fill="#f3f3f3" stroke="#d9d9d9" stroke-width="3"/>
 <path d="M890 735L960 712" stroke="#1f1f1f" stroke-width="7"/>
 <path d="M890 735L915 727" stroke="#ddd" stroke-width="8"/>
 <!-- palette -->
 <circle cx="1090" cy="646" r="101" fill="#ece5d9" stroke="#d7cbb8" stroke-width="2"/>
 <g>
  <circle cx="1119" cy="569" r="17.5" fill="#f23a10"/><circle cx="1157" cy="593" r="17.5" fill="#c3141c"/>
  <circle cx="1164" cy="636" r="17.5" fill="#7a3c12"/><circle cx="1150" cy="678" r="17" fill="#6bb62b"/>
  <circle cx="1120" cy="709" r="17.5" fill="#4e2ca3"/><circle cx="1083" cy="733" r="17.5" fill="#1f3fbe"/>
  <circle cx="1043" cy="731" r="17" fill="#333"/>
  <g fill="#fff" opacity="0.55"><ellipse cx="1126" cy="563" rx="5" ry="3"/><ellipse cx="1164" cy="587" rx="5" ry="3"/><ellipse cx="1171" cy="630" rx="5" ry="3"/><ellipse cx="1157" cy="672" rx="5" ry="3"/><ellipse cx="1127" cy="703" rx="5" ry="3"/><ellipse cx="1090" cy="727" rx="5" ry="3"/></g>
 </g>
 <!-- right pencils -->
 <g transform="translate(1124 289) rotate(23)"><path d="M0 0l-5 16h10z" fill="#f0cfb0"/><path d="M0 0l-1.6 5h3.2z" fill="#3a9ad6"/><rect x="-5" y="16" width="10" height="70" fill="#39a7e5"/><rect x="1.5" y="16" width="3.5" height="70" fill="#2a8fcc"/></g>
 <g transform="translate(1125 343) rotate(22)"><path d="M0 0l-6 18h12z" fill="#efc6a5"/><path d="M0 0l-2 6h4z" fill="#e8757a"/><rect x="-6" y="18" width="12" height="70" fill="#f07373"/><rect x="2" y="18" width="4" height="70" fill="#de5d5d"/></g>
 <g transform="translate(1143 348) rotate(27)"><path d="M0 0l-6 18h12z" fill="#eec5a2"/><path d="M0 0l-2 6h4z" fill="#7a4a2a"/><rect x="-6" y="18" width="12" height="100" fill="#a3582b"/><rect x="2" y="18" width="4" height="100" fill="#8c4722"/></g>
 <g transform="translate(1159 346) rotate(28)"><path d="M0 0l-6.5 19h13z" fill="#f2cda7"/><path d="M0 0l-2 6h4z" fill="#d9c21c"/><rect x="-6.5" y="19" width="13" height="130" fill="#f6e21f"/><rect x="2" y="19" width="4.5" height="130" fill="#e5cf10"/></g>
 <g transform="translate(1180 341) rotate(28)"><path d="M0 0l-6.5 19h13z" fill="#f0c9a6"/><path d="M0 0l-2 6h4z" fill="#cc2f6e"/><rect x="-6.5" y="19" width="13" height="170" fill="#e42f7b"/><rect x="2" y="19" width="4.5" height="170" fill="#c8226a"/></g>
 <g transform="translate(1198 343) rotate(30)"><path d="M0 0l-6.5 19h13z" fill="#f0c6a3"/><path d="M0 0l-2 6h4z" fill="#c23a2a"/><rect x="-6.5" y="19" width="13" height="180" fill="#d8392c"/><rect x="2" y="19" width="4.5" height="180" fill="#b92c22"/></g>
 <g transform="translate(1183 385) rotate(28)"><path d="M0 0l-6.5 19h13z" fill="#efc9a9"/><path d="M0 0l-2 6h4z" fill="#2a9ad0"/><rect x="-6.5" y="19" width="13" height="170" fill="#35a8de"/><rect x="2" y="19" width="4.5" height="170" fill="#238fc4"/></g>
 <g transform="translate(1206 378) rotate(28)"><path d="M0 0l-6.5 19h13z" fill="#efc6a4"/><path d="M0 0l-2 6h4z" fill="#16907a"/><rect x="-6.5" y="19" width="13" height="180" fill="#17a287"/><rect x="2" y="19" width="4.5" height="180" fill="#0f8a72"/></g>
 <g transform="translate(1210 388) rotate(26)"><path d="M0 0l-6 19h12z" fill="#e9c5a2"/><path d="M0 0l-2 6h4z" fill="#1e4a35"/><rect x="-6" y="19" width="12" height="170" fill="#1f5a3f"/><rect x="2" y="19" width="4" height="170" fill="#174a33"/></g>
 <g transform="translate(1216 410) rotate(28)"><path d="M0 0l-6.5 19h13z" fill="#ecd0ad"/><path d="M0 0l-2 6h4z" fill="#98c22c"/><rect x="-6.5" y="19" width="13" height="140" fill="#a6cf2e"/><rect x="2" y="19" width="4.5" height="140" fill="#8fb81f"/></g>
 <!-- notepad -->
 <rect x="801" y="318" width="5" height="390" fill="#141414"/>
 <rect x="1089" y="313" width="10" height="403" fill="#141414"/>
 <rect x="805" y="314" width="286" height="405" fill="#f6f6f8"/>
 <g stroke="#ececf0" stroke-width="0.5">
  <path d="M805 340h284M805 365h284M805 390h284M805 415h284M805 440h284M805 465h284M805 490h284M805 515h284M805 540h284M805 565h284M805 590h284M805 615h284M805 640h284M805 665h284M805 690h284"/>
  <path d="M830 314v405M855 314v405M880 314v405M905 314v405M930 314v405M955 314v405M980 314v405M1005 314v405M1030 314v405M1055 314v405M1080 314v405"/>
 </g>
 <rect x="807" y="308" width="292" height="6" fill="#1a1a1a"/>
 <g id="rings"><path d="M814.0 327 C811.0 318 813.0 304 817.5 304 C821.0 304 821.5 310 820.5 313" fill="none" stroke="#3a3a3a" stroke-width="2.4"/><circle cx="815.0" cy="327.5" r="3.4" fill="#3a3a3a"/><path d="M829.8 327 C826.8 318 828.8 304 833.3 304 C836.8 304 837.3 310 836.3 313" fill="none" stroke="#3a3a3a" stroke-width="2.4"/><circle cx="830.8" cy="327.5" r="3.4" fill="#3a3a3a"/><path d="M845.6 327 C842.6 318 844.6 304 849.1 304 C852.6 304 853.1 310 852.1 313" fill="none" stroke="#3a3a3a" stroke-width="2.4"/><circle cx="846.6" cy="327.5" r="3.4" fill="#3a3a3a"/><path d="M861.5 327 C858.5 318 860.5 304 865.0 304 C868.5 304 869.0 310 868.0 313" fill="none" stroke="#3a3a3a" stroke-width="2.4"/><circle cx="862.5" cy="327.5" r="3.4" fill="#3a3a3a"/><path d="M877.3 327 C874.3 318 876.3 304 880.8 304 C884.3 304 884.8 310 883.8 313" fill="none" stroke="#3a3a3a" stroke-width="2.4"/><circle cx="878.3" cy="327.5" r="3.4" fill="#3a3a3a"/><path d="M893.1 327 C890.1 318 892.1 304 896.6 304 C900.1 304 900.6 310 899.6 313" fill="none" stroke="#3a3a3a" stroke-width="2.4"/><circle cx="894.1" cy="327.5" r="3.4" fill="#3a3a3a"/><path d="M908.9 327 C905.9 318 907.9 304 912.4 304 C915.9 304 916.4 310 915.4 313" fill="none" stroke="#3a3a3a" stroke-width="2.4"/><circle cx="909.9" cy="327.5" r="3.4" fill="#3a3a3a"/><path d="M924.8 327 C921.8 318 923.8 304 928.3 304 C931.8 304 932.3 310 931.3 313" fill="none" stroke="#3a3a3a" stroke-width="2.4"/><circle cx="925.8" cy="327.5" r="3.4" fill="#3a3a3a"/><path d="M940.6 327 C937.6 318 939.6 304 944.1 304 C947.6 304 948.1 310 947.1 313" fill="none" stroke="#3a3a3a" stroke-width="2.4"/><circle cx="941.6" cy="327.5" r="3.4" fill="#3a3a3a"/><path d="M956.4 327 C953.4 318 955.4 304 959.9 304 C963.4 304 963.9 310 962.9 313" fill="none" stroke="#3a3a3a" stroke-width="2.4"/><circle cx="957.4" cy="327.5" r="3.4" fill="#3a3a3a"/><path d="M972.2 327 C969.2 318 971.2 304 975.7 304 C979.2 304 979.7 310 978.7 313" fill="none" stroke="#3a3a3a" stroke-width="2.4"/><circle cx="973.2" cy="327.5" r="3.4" fill="#3a3a3a"/><path d="M988.1 327 C985.1 318 987.1 304 991.6 304 C995.1 304 995.6 310 994.6 313" fill="none" stroke="#3a3a3a" stroke-width="2.4"/><circle cx="989.1" cy="327.5" r="3.4" fill="#3a3a3a"/><path d="M1003.9 327 C1000.9 318 1002.9 304 1007.4 304 C1010.9 304 1011.4 310 1010.4 313" fill="none" stroke="#3a3a3a" stroke-width="2.4"/><circle cx="1004.9" cy="327.5" r="3.4" fill="#3a3a3a"/><path d="M1019.7 327 C1016.7 318 1018.7 304 1023.2 304 C1026.7 304 1027.2 310 1026.2 313" fill="none" stroke="#3a3a3a" stroke-width="2.4"/><circle cx="1020.7" cy="327.5" r="3.4" fill="#3a3a3a"/><path d="M1035.5 327 C1032.5 318 1034.5 304 1039.0 304 C1042.5 304 1043.0 310 1042.0 313" fill="none" stroke="#3a3a3a" stroke-width="2.4"/><circle cx="1036.5" cy="327.5" r="3.4" fill="#3a3a3a"/><path d="M1051.4 327 C1048.4 318 1050.4 304 1054.9 304 C1058.4 304 1058.9 310 1057.9 313" fill="none" stroke="#3a3a3a" stroke-width="2.4"/><circle cx="1052.4" cy="327.5" r="3.4" fill="#3a3a3a"/><path d="M1067.2 327 C1064.2 318 1066.2 304 1070.7 304 C1074.2 304 1074.7 310 1073.7 313" fill="none" stroke="#3a3a3a" stroke-width="2.4"/><circle cx="1068.2" cy="327.5" r="3.4" fill="#3a3a3a"/><path d="M1083.0 327 C1080.0 318 1082.0 304 1086.5 304 C1090.0 304 1090.5 310 1089.5 313" fill="none" stroke="#3a3a3a" stroke-width="2.4"/><circle cx="1084.0" cy="327.5" r="3.4" fill="#3a3a3a"/></g>
 <!-- brushes -->
 <path d="M858 786L1028 695" stroke="#c4323a" stroke-width="9" stroke-linecap="round"/>
 <path d="M858 788L1028 697" stroke="#9a2028" stroke-width="3" stroke-linecap="round"/>
 <path d="M1026 696L1062 677" stroke="#b5b5b5" stroke-width="8"/>
 <path d="M1060 678L1096 652" stroke="#f3efe6" stroke-width="12" stroke-linecap="round"/>
 <path d="M902 781L1040 715" stroke="#2a8fc0" stroke-width="7" stroke-linecap="round"/>
 <path d="M1062 700L1102 676" stroke="#b5b5b5" stroke-width="7"/>
 <path d="M1100 677L1138 662" stroke="#f3efe6" stroke-width="11" stroke-linecap="round"/>
 <!-- text -->
 <g font-family="Liberation Serif" font-weight="bold" fill="#000" text-anchor="middle">
  <text x="943" y="356" font-size="24">Жазғы мектепке</text>
  <text x="943" y="385" font-size="24">қабылдау:</text>
  <text x="944" y="410" font-size="18.5" letter-spacing="0.85">❑Ата – ананың немесе заңды</text>
  <text x="943" y="434" font-size="18.5" letter-spacing="0.85">өкілдің өтініш беруі</text>
  <text x="943" y="459" font-size="18.5" letter-spacing="0.85">негізінде;</text>
  <text x="943" y="508" font-size="18.5" letter-spacing="0.85">❑Жазғы мектеп тегін</text>
  <text x="943" y="532" font-size="18.5" letter-spacing="0.85">оқытылады;</text>
  <text x="943" y="582" font-size="18.5" letter-spacing="0.85">❑Үлгерімі төмен балаларға</text>
  <text x="943" y="607" font-size="18.5" letter-spacing="0.85">басты назар аударылады;</text>
  <path d="M858 588h175M825 612h232" stroke="#e33" stroke-width="1" stroke-dasharray="1.5 1.5" fill="none"/>
  <text x="943" y="656" font-size="18.5" letter-spacing="0.85">❑Мектеп формасы</text>
  <text x="943" y="680" font-size="18.5" letter-spacing="0.85">міндеттелмейді.</text>
 </g>
</symbol>
</defs></svg>
<div class="a" style="left:638px;top:253px;width:740px;height:556px;border:1px solid #cfcfcf"></div>
<svg style="left:638px;top:253px" width="739" height="555"><use href="#slide" width="739" height="555"/></svg>
<!-- status bar -->
<div class="a" style="left:188px;top:859px;width:1348px;height:16px;background:#d9481c"></div>
<div class="t" style="left:193px;top:862px;font-size:8px;color:#fde6dc">СЛАЙД 3 ИЗ 8</div>
<svg style="left:257px;top:861px" width="11" height="11"><rect x="0.5" y="1" width="4.5" height="9" fill="none" stroke="#fde6dc" stroke-width="0.9"/><rect x="6" y="1" width="4.5" height="9" fill="none" stroke="#fde6dc" stroke-width="0.9"/></svg>
<div class="t" style="left:280px;top:862px;font-size:8px;color:#fde6dc">РУССКИЙ</div>
<svg style="left:1147px;top:861px" width="10" height="11"><path d="M1 3h8M1 5.5h8M1 8h8M3 1.5L5 0 7 1.5" stroke="#fde6dc" stroke-width="0.9" fill="none"/></svg>
<div class="t" style="left:1157px;top:862px;font-size:8px;color:#fde6dc">ЗАМЕТКИ</div>
<svg style="left:1207px;top:861px" width="10" height="11"><path d="M0 1h10v6H4l-3 3V7H0z" fill="#fde6dc"/></svg>
<div class="t" style="left:1218px;top:862px;font-size:8px;color:#fde6dc">ПРИМЕЧАНИЯ</div>
<div class="a" style="left:1287px;top:859px;width:22px;height:16px;background:#b83c17"></div>
<svg style="left:1292px;top:861px" width="100" height="12" viewBox="0 0 100 12">
 <rect x="1" y="1" width="9" height="10" fill="none" stroke="#fde6dc" stroke-width="1.2"/><rect x="3.5" y="2.5" width="5" height="4" fill="none" stroke="#fde6dc" stroke-width="1"/>
 <rect x="28" y="1.5" width="4" height="3.5" fill="#fde6dc"/><rect x="33.5" y="1.5" width="4" height="3.5" fill="#fde6dc"/><rect x="28" y="6.5" width="4" height="3.5" fill="#fde6dc"/><rect x="33.5" y="6.5" width="4" height="3.5" fill="#fde6dc"/>
 <rect x="54" y="1.5" width="9" height="9" fill="none" stroke="#fde6dc" stroke-width="0.9"/><path d="M56 3l5 5M61 3l-5 5" stroke="#fde6dc" stroke-width="0.8"/>
 <path d="M80 2h9M81 2v5h7V2M84.5 7v3M82.5 10.5h4" fill="none" stroke="#fde6dc" stroke-width="0.9"/>
</svg>
<div class="a" style="left:1396px;top:866px;width:4px;height:1.5px;background:#fde6dc"></div>
<div class="a" style="left:1402px;top:866.5px;width:70px;height:1px;background:#f7b59b"></div>
<div class="a" style="left:1437px;top:862px;width:3px;height:9px;background:#fde6dc"></div>
<svg style="left:1474px;top:863px" width="8" height="8"><path d="M4 0.5v7M0.5 4h7" stroke="#fde6dc" stroke-width="1.3"/></svg>
<div class="t" style="left:1491px;top:862px;font-size:8px;color:#fde6dc">110 %</div>
<svg style="left:1521px;top:861px" width="11" height="11"><rect x="0.5" y="0.5" width="10" height="10" fill="none" stroke="#fde6dc" stroke-width="1"/><path d="M2 2l3 3M9 2L6 5M2 9l3-3M9 9L6 6" stroke="#fde6dc" stroke-width="1"/></svg>
<!-- inner windows taskbar -->
<div class="a" style="left:188px;top:875px;width:1348px;height:28px;background:linear-gradient(90deg,#232830,#2a3038 40%,#262b33)"></div>
<div class="a" style="left:188px;top:875px;width:34px;height:28px;background:#26292e"></div>
<svg style="left:199px;top:883px" width="12" height="12"><rect x="0" y="0.5" width="5.3" height="5" fill="#fff"/><rect x="6.3" y="0" width="5.7" height="5.5" fill="#fff"/><rect x="0" y="6.5" width="5.3" height="5" fill="#fff"/><rect x="6.3" y="6.5" width="5.7" height="5.5" fill="#fff"/></svg>
<div class="a" style="left:222px;top:875px;width:241px;height:28px;background:#f2f2f2"></div>
<svg style="left:230px;top:882px" width="12" height="13"><circle cx="7.5" cy="4.5" r="3.6" fill="none" stroke="#333" stroke-width="1.2"/><path d="M5 7.5L1 11.5" stroke="#333" stroke-width="1.3"/></svg>
<div class="t" style="left:250px;top:884px;font-size:10.5px;color:#333">Введите здесь текст для поиска</div>
<svg style="left:473px;top:882px" width="14" height="14"><path d="M1 2h9M1 12h9M3 4.5h6v5H3z M12 1v12" fill="none" stroke="#fff" stroke-width="1"/></svg>
<svg style="left:507px;top:880px" width="17" height="17"><circle cx="8.5" cy="8.5" r="8" fill="#1f8fd8"/><path d="M3 10c1-5 8-7 11-2-1 2-6 2-6 0 0-1 1-1 2-1" fill="none" stroke="#6ee08a" stroke-width="2.2"/></svg>
<svg style="left:541px;top:881px" width="17" height="15"><path d="M0 2h6l2 2h9v11H0z" fill="#e8b93b"/><rect x="0" y="6" width="17" height="9" fill="#f5d36a"/><rect x="4" y="9" width="9" height="3" fill="#3b8de0"/></svg>
<svg style="left:576px;top:880px" width="16" height="17"><path d="M5 4a3 3 0 0 1 6 0" fill="none" stroke="#ddd" stroke-width="1.2"/><rect x="1" y="4" width="14" height="12" fill="#f0f0f0"/><rect x="4" y="7" width="3.5" height="3.5" fill="#f25022"/><rect x="8.5" y="7" width="3.5" height="3.5" fill="#7fba00"/><rect x="4" y="11.5" width="3.5" height="3.5" fill="#00a4ef"/><rect x="8.5" y="11.5" width="3.5" height="3.5" fill="#ffb900"/></svg>
<svg style="left:611px;top:880px" width="17" height="17"><rect width="17" height="17" fill="#1ba1e2"/><path d="M5 3v10h8" fill="none" stroke="#fff" stroke-width="2.3"/></svg>
<svg style="left:645px;top:880px" width="17" height="17"><path d="M2 2l4 3h5l4-3v9l-6.5 5L2 11z" fill="none" stroke="#c8102e" stroke-width="2.4"/></svg>
<div class="a" style="left:674px;top:876px;width:28px;height:27px;background:#3a3f47"></div>
<svg style="left:679px;top:880px" width="18" height="18"><rect x="0" y="0" width="18" height="18" fill="#8b2a8a"/><rect x="0" y="0" width="18" height="4.5" fill="#e63b2e"/><rect x="0" y="9" width="18" height="4.5" fill="#3b7bd9"/><rect x="0" y="13.5" width="18" height="4.5" fill="#2ea34a"/><rect x="7" y="2" width="4" height="14" fill="#f0c34a"/></svg>
<div class="a" style="left:675px;top:901px;width:26px;height:2px;background:#76b9ed"></div>
<div class="a" style="left:708px;top:876px;width:30px;height:27px;background:#4a5058"></div>
<svg style="left:714px;top:880px" width="18" height="18"><rect x="7" y="2" width="10" height="14" fill="#fff" stroke="#d24726" stroke-width="0.8"/><path d="M9 5h6M9 8h6M9 11h6" stroke="#d24726" stroke-width="1"/><rect x="0" y="1" width="11" height="16" fill="#d24726"/><text x="2.5" y="13" font-size="10" fill="#fff" font-family="Liberation Sans" font-weight="bold">P</text></svg>
<div class="a" style="left:709px;top:901px;width:28px;height:2px;background:#76b9ed"></div>
<svg style="left:748px;top:880px" width="18" height="18"><rect x="7" y="2" width="10" height="14" fill="#fff" stroke="#2b579a" stroke-width="0.8"/><path d="M9 5h6M9 8h6M9 11h6" stroke="#2b579a" stroke-width="1"/><rect x="0" y="1" width="11" height="16" fill="#2b579a"/><text x="0.5" y="13" font-size="9" fill="#fff" font-family="Liberation Sans" font-weight="bold">W</text></svg>
<div class="a" style="left:811px;top:901px;width:28px;height:2px;background:#76b9ed"></div>
<svg style="left:1362px;top:884px" width="10" height="7"><path d="M1 6l4-4 4 4" fill="none" stroke="#fff" stroke-width="1.1"/></svg>
<svg style="left:1380px;top:881px" width="9" height="14"><rect x="2" y="0" width="5" height="9" rx="2.5" fill="#fff"/><path d="M4.5 10v3M2 13.5h5" stroke="#fff" stroke-width="1"/></svg>
<svg style="left:1395px;top:882px" width="13" height="12"><path d="M1 4h2.5L7 1v10L3.5 8H1z" fill="none" stroke="#fff" stroke-width="1"/><path d="M9 3.5a3 3 0 0 1 0 5M10.5 2a5 5 0 0 1 0 8" fill="none" stroke="#fff" stroke-width="0.9"/></svg>
<svg style="left:1412px;top:882px" width="14" height="12"><rect x="3" y="1" width="10" height="7" fill="none" stroke="#fff" stroke-width="1"/><path d="M8 8v2M5 10.5h6M0.5 3v6" stroke="#fff" stroke-width="1"/></svg>
<div class="t" style="left:1432px;top:884px;font-size:9.5px;color:#fff">ҚАЗ</div>
<div class="t" style="left:1465px;top:878px;font-size:8.5px;color:#fff">10:51</div>
<div class="t" style="left:1456px;top:890px;font-size:8.5px;color:#fff">22.05.2021</div>
<svg style="left:1506px;top:881px" width="18" height="16"><path d="M1 1h12v9H6l-3 3v-3H1z" fill="#fff"/><path d="M3 4h8M3 6.5h8" stroke="#333" stroke-width="0.8"/><circle cx="13" cy="11" r="4.3" fill="#222" stroke="#fff" stroke-width="0.8"/><text x="11.2" y="13.6" font-size="6.5" fill="#fff" font-family="Liberation Sans">4</text></svg>
<div class="a" style="left:1534px;top:875px;width:1px;height:28px;background:#555"></div>
<!-- notification bar behind toast -->
<div class="a" style="left:650px;top:839px;width:425px;height:29px;background:#fff;box-shadow:0 1px 3px rgba(0,0,0,0.35)"></div>
<svg style="left:656px;top:848px" width="4" height="12"><path d="M0.7 0v11M3 0v11" stroke="#bbb" stroke-width="0.9"/></svg>
<div class="t" style="left:667px;top:849px;font-size:9.2px;color:#444">Приложению meet.google.com</div>
<div class="a" style="left:1010px;top:843px;width:21px;height:20px;background:#1a73e8;border-radius:2px"></div>
<div class="t" style="left:1039px;top:849px;font-size:9.2px;color:#1a73e8">Скрыть</div>
</div>
<!-- ===== TILES ===== -->
<div class="a" style="left:1724px;top:146px;width:196px;height:665px;background:#111"></div>
<!-- tile 1: Вы -->
<svg style="left:1724px;top:146px" width="196" height="110" viewBox="0 0 196 110">
 <defs>
  <linearGradient id="w1" x1="0" x2="1"><stop offset="0" stop-color="#cbbda3"/><stop offset="1" stop-color="#dbd3c4"/></linearGradient>
  <linearGradient id="w2" x1="0" x2="1"><stop offset="0" stop-color="#e2e1e2"/><stop offset="1" stop-color="#d6dce2"/></linearGradient>
  <radialGradient id="sk1" cx="0.5" cy="0.42" r="0.6"><stop offset="0" stop-color="#e8c2ab"/><stop offset="0.7" stop-color="#d6a68c"/><stop offset="1" stop-color="#bf8b73"/></radialGradient>
 </defs>
 <rect width="86" height="110" fill="url(#w1)"/>
 <rect x="86" width="110" height="110" fill="url(#w2)"/>
 <rect x="83" width="3" height="110" fill="#c9b79c"/>
 <rect x="49" y="67" width="8" height="8" fill="#e4dccd" stroke="#cfc3b0" stroke-width="0.6"/>
 <path d="M146 98 Q150 94 170 93 L196 92 V110 H146z" fill="#27348a"/>
 <path d="M70 70 Q64 16 97 15 Q128 16 124 66 L118 66 Q116 40 97 38 Q78 40 76 70z" fill="#3a2c24"/><path d="M70 60 Q62 85 64 110 L72 110 Q70 88 76 64z" fill="#3a2c24"/>
 <path d="M36 110 Q40 86 62 80 Q80 76 96 88 Q114 76 134 80 Q152 86 156 110z" fill="#1b1b1d"/>
 <path d="M68 76 Q64 92 68 110 L74 110 Q70 92 73 78z" fill="#8f8574"/>
 <rect x="86" y="80" width="22" height="18" fill="#c99780"/>
 <path d="M86 96 L96 108 L108 96z" fill="#6a6a70"/>
 <ellipse cx="97" cy="58" rx="23" ry="30" fill="url(#sk1)"/>
 <path d="M73 42 Q80 26 98 26 Q118 26 121 44 Q110 36 96 35 Q82 35 73 42z" fill="#3a2c24"/>
 <path d="M80 50 Q86 47 92 50M102 50 Q108 47 114 50" stroke="#4a3630" stroke-width="1.6" fill="none"/>
 <rect x="76" y="52" width="19" height="10" rx="3" fill="none" stroke="#6e625c" stroke-width="1"/>
 <rect x="99" y="52" width="19" height="10" rx="3" fill="none" stroke="#6e625c" stroke-width="1"/>
 <path d="M95 55h4" stroke="#6e625c" stroke-width="1"/>
 <ellipse cx="86" cy="57" rx="3" ry="1.4" fill="#3a2a26"/><ellipse cx="108" cy="57" rx="3" ry="1.4" fill="#3a2a26"/>
 <path d="M96 62 Q94 70 97 72" stroke="#b07e68" stroke-width="1.2" fill="none"/>
 <path d="M89 80 Q97 78 105 80" stroke="#9a5e52" stroke-width="1.6" fill="none"/>
</svg>
<!-- tile 2: Сара -->
<div class="a" style="left:1724px;top:257px;width:196px;height:110px;background:#202124"></div>
<div class="a" style="left:1786px;top:257px;width:70px;height:110px;overflow:hidden;background:linear-gradient(90deg,#c9e6cf 0%,#b4dcbf 45%,#cfcfcf 55%,#d9d9d9 100%)">
 <div class="a" style="left:-5px;top:62px;width:80px;height:60px;background:#1b1a1f;border-radius:40% 40% 0 0"></div>
 <div class="a" style="left:0px;top:18px;width:64px;height:56px;border-radius:45% 45% 30% 30%;background:#2e2226"></div>
 <div class="a" style="left:6px;top:30px;width:54px;height:76px;border-radius:42% 42% 48% 48%;background:radial-gradient(ellipse at 50% 45%,#e7c0aa,#d6a68e 65%,#b98470)"></div>
 <div class="a" style="left:2px;top:13px;width:58px;height:14px;border-radius:6px;background:#4a3a40;opacity:0.9"></div>
 <div class="a" style="left:1px;top:50px;width:12px;height:50px;border-radius:6px;background:#d3a58c"></div>
 <div class="a" style="left:14px;top:60px;width:14px;height:3px;border-radius:50%;background:#3a2a2a"></div>
 <div class="a" style="left:38px;top:60px;width:14px;height:3px;border-radius:50%;background:#3a2a2a"></div>
 <div class="a" style="left:16px;top:67px;width:10px;height:3px;border-radius:50%;background:#4a3a3a"></div>
 <div class="a" style="left:40px;top:67px;width:10px;height:3px;border-radius:50%;background:#4a3a3a"></div>
 <div class="a" style="left:27px;top:92px;width:14px;height:3px;border-radius:50%;background:#a56a60"></div>
</div>
<!-- tile 3: N A -->
<div class="a" style="left:1724px;top:368px;width:196px;height:110px;background:#202124"></div>
<div class="a" style="left:1786px;top:368px;width:70px;height:110px;background:linear-gradient(180deg,#ded5c8 0%,#cfc2b2 50%,#a89484 100%)">
 <div class="a" style="left:50px;top:0;width:20px;height:110px;background:linear-gradient(90deg,rgba(255,255,255,0),rgba(255,255,255,0.35))"></div>
 <div class="a" style="left:10px;top:98px;width:34px;height:14px;border-radius:50% 50% 0 0;background:#6a5548"></div>
</div>
<!-- tile 4: Сабр -->
<div class="a" style="left:1724px;top:479px;width:196px;height:110px;background:#202124"></div>
<div class="a" style="left:1786px;top:479px;width:70px;height:110px;overflow:hidden;background:linear-gradient(90deg,#d6ecd0 0%,#b7d6ae 12%,#f0d4c8 16%,#f5ddd3 100%)">
 <div class="a" style="left:0px;top:46px;width:70px;height:70px;border-radius:22px 22px 0 0;background:#17161c"></div>
 <div class="a" style="left:-4px;top:62px;width:18px;height:50px;border-radius:8px;background:#d9ab92"></div>
 <div class="a" style="left:12px;top:2px;width:54px;height:84px;border-radius:45% 45% 25% 25%;background:#141218"></div>
 <div class="a" style="left:21px;top:20px;width:36px;height:42px;border-radius:45% 45% 50% 50%;background:radial-gradient(ellipse at 50% 45%,#ebc8b2,#d8aa90 70%,#c4937a)"></div>
 <div class="a" style="left:27px;top:35px;width:8px;height:2.5px;border-radius:50%;background:#3a2a2a"></div>
 <div class="a" style="left:43px;top:35px;width:8px;height:2.5px;border-radius:50%;background:#3a2a2a"></div>
 <div class="a" style="left:46px;top:46px;width:26px;height:11px;border-radius:6px;background:#ddb098;transform:rotate(-25deg)"></div>
 <div class="a" style="left:40px;top:100px;width:30px;height:12px;background:#e0c2b5"></div>
</div>
<!-- tile 5: sabira -->
<div class="a" style="left:1724px;top:590px;width:196px;height:110px;overflow:hidden;background:linear-gradient(90deg,#5f2c2c 0%,#8a3636 25%,#9a3a3c 55%,#8c3234 88%,#f4f4f4 90%,#fff 100%)">
 <div class="a" style="left:0;top:0;width:176px;height:110px;background:repeating-linear-gradient(90deg,rgba(0,0,0,0.05) 0 10px,rgba(255,255,255,0.02) 10px 22px)"></div>
 <div class="a" style="left:54px;top:80px;width:138px;height:40px;border-radius:40px 40px 0 0;background:#d4dcda"></div>
 <div class="a" style="left:86px;top:17px;width:64px;height:50px;border-radius:50% 50% 20% 20%;background:#1e1618"></div>
 <div class="a" style="left:88px;top:24px;width:60px;height:76px;border-radius:44% 44% 48% 48%;background:radial-gradient(ellipse at 50% 42%,#ecccb8,#ddb09a 65%,#c59680)"></div>
 <div class="a" style="left:98px;top:52px;width:12px;height:4px;border-radius:50%;background:#5a3a36"></div>
 <div class="a" style="left:124px;top:52px;width:12px;height:4px;border-radius:50%;background:#5a3a36"></div>
 <div class="a" style="left:108px;top:83px;width:20px;height:6px;border-radius:50%;background:#6e3a3a"></div>
</div>
<div class="a" style="left:1724px;top:699px;width:196px;height:1px;background:#1e6e3a"></div>
<!-- tile 6: Каламкас -->
<div class="a" style="left:1724px;top:701px;width:196px;height:110px;overflow:hidden;background:linear-gradient(90deg,#f0ecee 0%,#e8e2e4 40%,#eae3e6 100%)">
 <div class="a" style="left:0;top:66px;width:30px;height:20px;background:#6a6258;border:2px solid #b5a890"></div>
 <div class="a" style="left:0;top:86px;width:40px;height:24px;background:#4a4038"></div>
 <svg style="left:40px;top:0" width="40" height="110"><path d="M18 0L30 0L26 30L22 60L16 110L0 110L6 70z" fill="#2f9fd6"/><circle cx="20" cy="78" r="9" fill="#f1c02a"/><path d="M22 0h3v110h-3z" fill="#c9a45a" opacity="0.6"/></svg>
 <div class="a" style="left:79px;top:-4px;width:30px;height:24px;border-radius:50%;background:radial-gradient(circle,#3a8ac0 0 25%,#e8c060 30% 60%,#c9a050 70%)"></div>
 <div class="a" style="left:118px;top:56px;width:20px;height:24px;border-radius:3px;background:#dccab0"></div>
 <div class="a" style="left:48px;top:80px;width:110px;height:40px;border-radius:36px 36px 0 0;background:#cfd3e2"></div>
 <div class="a" style="left:48px;top:80px;width:110px;height:40px;border-radius:36px 36px 0 0;background:repeating-radial-gradient(circle at 30% 40%,rgba(90,110,170,0.25) 0 2px,transparent 2px 6px)"></div>
 <div class="a" style="left:71px;top:22px;width:54px;height:42px;border-radius:50% 50% 35% 35%;background:#4e2a26"></div>
 <div class="a" style="left:77px;top:38px;width:41px;height:46px;border-radius:42% 42% 48% 48%;background:radial-gradient(ellipse at 50% 42%,#e9c2ae,#d5a38c 68%,#bf8a74)"></div>
 <div class="a" style="left:78px;top:53px;width:39px;height:1.5px;background:#3a2a2a"></div>
 <div class="a" style="left:79px;top:53px;width:18px;height:8px;border:1px solid #3a2a2a;border-radius:2px 2px 5px 5px"></div>
 <div class="a" style="left:98px;top:53px;width:18px;height:8px;border:1px solid #3a2a2a;border-radius:2px 2px 5px 5px"></div>
 <div class="a" style="left:91px;top:72px;width:14px;height:4px;border-radius:50%;background:#b25050"></div>
</div>
<!-- tile labels & mute icons -->
<svg width="0" height="0" style="left:0;top:0"><defs><symbol id="mute" viewBox="0 0 24 24"><circle cx="12" cy="12" r="12" fill="#d93025"/><path d="M12 6.3c1.1 0 2 .9 2 2v3.2M10 8.3v3.4c0 1.1.9 2 2 2" fill="none" stroke="#fff" stroke-width="1.6"/><path d="M8 11.7c0 2.2 1.8 4 4 4 .8 0 1.5-.2 2.1-.6M16 11.7c0 .5-.1 1-.3 1.4M12 15.8v2.3" fill="none" stroke="#fff" stroke-width="1.5"/><path d="M7 6.5l10 11" stroke="#fff" stroke-width="1.6"/></symbol></defs></svg>
<svg style="left:1731px;top:226px" width="24" height="24"><use href="#mute"/></svg>
<div class="t" style="left:1762px;top:232px;font-size:12px;font-weight:bold;color:#fff;text-shadow:0 0 2px rgba(0,0,0,0.5)">Вы</div>
<svg style="left:1731px;top:337px" width="24" height="24"><use href="#mute"/></svg>
<div class="t" style="left:1762px;top:343px;font-size:12px;font-weight:bold;color:#fff;letter-spacing:-0.35px;text-shadow:0 0 2px rgba(0,0,0,0.5)">Сара Алимбаева</div>
<svg style="left:1731px;top:447px" width="24" height="24"><use href="#mute"/></svg>
<div class="t" style="left:1762px;top:453px;font-size:12px;font-weight:bold;color:#fff">N A</div>
<svg style="left:1731px;top:558px" width="24" height="24"><use href="#mute"/></svg>
<div class="t" style="left:1762px;top:564px;font-size:12px;font-weight:bold;color:#fff;letter-spacing:-0.35px;text-shadow:0 0 2px rgba(0,0,0,0.5)">Сабр Хасен</div>
<svg style="left:1734px;top:677px" width="18" height="8"><circle cx="3" cy="4" r="2.3" fill="#5cd6c5"/><circle cx="9" cy="4" r="2.3" fill="#5cd6c5"/><circle cx="15" cy="4" r="2.3" fill="#5cd6c5"/></svg>
<div class="t" style="left:1762px;top:675px;font-size:12px;font-weight:bold;color:#fff;letter-spacing:-0.35px;text-shadow:0 0 2px rgba(0,0,0,0.5)">sabira iztleuova</div>
<svg style="left:1731px;top:780px" width="24" height="24"><use href="#mute"/></svg>
<div class="t" style="left:1762px;top:786px;font-size:12px;font-weight:bold;color:#fff;letter-spacing:-0.35px;text-shadow:0 0 2px rgba(0,0,0,0.5)">Каламкас Алмасбаева</div>
<!-- ===== BOTTOM BAR ===== -->
<div class="a" style="left:0;top:903px;width:1920px;height:80px;background:#fff"></div>
<div class="t" style="left:22px;top:936px;font-size:16.2px;color:#3c4043">Информация о встрече</div>
<svg style="left:210px;top:938px" width="14" height="10"><path d="M1.5 8.5l5.5-6 5.5 6" fill="none" stroke="#3c4043" stroke-width="1.8"/></svg>
<div class="a" style="left:870px;top:918px;width:50px;height:50px;border-radius:50%;background:#d93025"></div>
<svg style="left:883px;top:931px" width="24" height="24" viewBox="0 0 24 24"><path d="M12 5c1.3 0 2.3 1 2.3 2.3v3.6M9.7 7.5v4.2c0 1.3 1 2.3 2.3 2.3" fill="none" stroke="#fff" stroke-width="1.9"/><path d="M7.3 11.5c0 2.6 2.1 4.7 4.7 4.7.9 0 1.7-.2 2.4-.7M16.7 11.5c0 .6-.1 1.2-.3 1.7M12 16.3v2.8" fill="none" stroke="#fff" stroke-width="1.8"/><path d="M6 5.5l12 13" stroke="#fff" stroke-width="1.9"/></svg>
<div class="a" style="left:935px;top:918px;width:50px;height:50px;border-radius:50%;border:1px solid #dadce0;background:#fff"></div>
<svg style="left:948px;top:937px" width="24" height="12" viewBox="0 0 24 12"><path d="M1.5 6.5C7 1.5 17 1.5 22.5 6.5l-2.3 2.8-3.6-1.6V5.3C13.6 4.2 10.4 4.2 7.4 5.3v2.4L3.8 9.3z" fill="#d93025"/></svg>
<div class="a" style="left:1000px;top:918px;width:50px;height:50px;border-radius:50%;border:1px solid #dadce0;background:#fff"></div>
<svg style="left:1016px;top:935px" width="19" height="16" viewBox="0 0 19 16"><rect x="1" y="1.5" width="11.5" height="13" rx="1" fill="none" stroke="#3c4043" stroke-width="1.9"/><path d="M13 5.5l5-3.5v12l-5-3.5z" fill="#3c4043"/></svg>
<div class="a" style="left:1561px;top:904px;width:149px;height:79px;background:#f1f1f1"></div>
<svg style="left:1627px;top:925px" width="17" height="14" viewBox="0 0 17 14"><rect x="1" y="1" width="15" height="12" rx="1.5" fill="none" stroke="#5f6368" stroke-width="1.6"/><text x="3" y="10" font-size="7" font-weight="bold" fill="#5f6368" font-family="Liberation Sans">CC</text></svg>
<div class="a" style="left:1579px;top:948px;width:114px;height:21px;border-radius:3px;background:#616469"></div>
<div class="t" style="left:1586px;top:953px;font-size:9.6px;color:#fff;font-weight:bold;letter-spacing:-0.5px">Включить субтитры (C)</div>
<svg style="left:1777px;top:915px" width="22" height="18" viewBox="0 0 22 18"><rect x="1.5" y="1.5" width="19" height="15" rx="1.5" fill="none" stroke="#3c4043" stroke-width="1.8"/><path d="M11 13V6M7.8 8.8L11 5.5l3.2 3.3z" fill="#3c4043" stroke="#3c4043" stroke-width="1.6"/></svg>
<div class="t" style="left:1746px;top:940px;font-size:12.5px;color:#3c4043">sabira iztleuova</div>
<div class="t" style="left:1715px;top:956px;font-size:12.8px;color:#3c4043;letter-spacing:-0.2px">сейчас на главном экране</div>
<svg style="left:1890px;top:934px" width="6" height="19"><circle cx="3" cy="2.5" r="2.2" fill="#3c4043"/><circle cx="3" cy="9.3" r="2.2" fill="#3c4043"/><circle cx="3" cy="16" r="2.2" fill="#3c4043"/></svg>
<!-- ===== DOWNLOADS ===== -->
<div class="a" style="left:0;top:983px;width:1920px;height:57px;background:#fff;border-top:1px solid #dadce0"></div>
<svg style="left:22px;top:1003px" width="13" height="16" viewBox="0 0 13 16"><path d="M0.5 0.5h8l4 4v11h-12z" fill="#fff" stroke="#777" stroke-width="0.9"/><path d="M8.5 0.5v4h4" fill="none" stroke="#777" stroke-width="0.9"/><rect x="2.5" y="6.5" width="7" height="6" fill="#1a5fb4"/><path d="M2.5 12.5l3-3 2 2 2-1.5v2.5z" fill="#4fa3e0"/></svg>
<div class="t" style="left:51px;top:1005px;font-size:13px;color:#3c4043;letter-spacing:-0.1px">WhatsApp Image....jpeg</div>
<svg style="left:207px;top:1008px" width="12" height="8"><path d="M1 7l5-5 5 5" fill="none" stroke="#5f6368" stroke-width="1.6"/></svg>
<div class="a" style="left:236px;top:990px;width:1px;height:43px;background:#dadce0"></div>
<svg style="left:255px;top:1003px" width="13" height="16" viewBox="0 0 13 16"><path d="M0.5 0.5h8l4 4v11h-12z" fill="#fff" stroke="#777" stroke-width="0.9"/><path d="M8.5 0.5v4h4" fill="none" stroke="#777" stroke-width="0.9"/><rect x="2.5" y="6.5" width="7" height="6" fill="#1a5fb4"/><path d="M2.5 12.5l3-3 2 2 2-1.5v2.5z" fill="#4fa3e0"/></svg>
<div class="t" style="left:284px;top:1005px;font-size:13px;color:#3c4043;letter-spacing:-0.1px">WhatsApp Image....jpeg</div>
<svg style="left:440px;top:1008px" width="12" height="8"><path d="M1 7l5-5 5 5" fill="none" stroke="#5f6368" stroke-width="1.6"/></svg>
<div class="a" style="left:469px;top:990px;width:1px;height:43px;background:#dadce0"></div>
<svg style="left:488px;top:1003px" width="13" height="16" viewBox="0 0 13 16"><path d="M0.5 0.5h8l4 4v11h-12z" fill="#fff" stroke="#777" stroke-width="0.9"/><path d="M8.5 0.5v4h4" fill="none" stroke="#777" stroke-width="0.9"/><rect x="2.5" y="6.5" width="7" height="6" fill="#1a5fb4"/><path d="M2.5 12.5l3-3 2 2 2-1.5v2.5z" fill="#4fa3e0"/></svg>
<div class="t" style="left:517px;top:1005px;font-size:13px;color:#3c4043;letter-spacing:-0.1px">WhatsApp Image....jpeg</div>
<svg style="left:673px;top:1008px" width="12" height="8"><path d="M1 7l5-5 5 5" fill="none" stroke="#5f6368" stroke-width="1.6"/></svg>
<div class="a" style="left:702px;top:990px;width:1px;height:43px;background:#dadce0"></div>
<svg style="left:721px;top:1003px" width="13" height="16" viewBox="0 0 13 16"><path d="M0.5 0.5h8l4 4v11h-12z" fill="#fff" stroke="#777" stroke-width="0.9"/><path d="M8.5 0.5v4h4" fill="none" stroke="#777" stroke-width="0.9"/><rect x="2.5" y="6.5" width="7" height="6" fill="#1a5fb4"/><path d="M2.5 12.5l3-3 2 2 2-1.5v2.5z" fill="#4fa3e0"/></svg>
<div class="t" style="left:750px;top:1005px;font-size:13px;color:#3c4043;letter-spacing:-0.1px">WhatsApp Image....jpeg</div>
<svg style="left:906px;top:1008px" width="12" height="8"><path d="M1 7l5-5 5 5" fill="none" stroke="#5f6368" stroke-width="1.6"/></svg>
<div class="a" style="left:935px;top:990px;width:1px;height:43px;background:#dadce0"></div>
<svg style="left:954px;top:1003px" width="13" height="16" viewBox="0 0 13 16"><path d="M0.5 0.5h8l4 4v11h-12z" fill="#fff" stroke="#777" stroke-width="0.9"/><path d="M8.5 0.5v4h4" fill="none" stroke="#777" stroke-width="0.9"/><rect x="2.5" y="6.5" width="7" height="6" fill="#1a5fb4"/><path d="M2.5 12.5l3-3 2 2 2-1.5v2.5z" fill="#4fa3e0"/></svg>
<div class="t" style="left:983px;top:1005px;font-size:13px;color:#3c4043;letter-spacing:-0.1px">WhatsApp Image....jpeg</div>
<svg style="left:1139px;top:1008px" width="12" height="8"><path d="M1 7l5-5 5 5" fill="none" stroke="#5f6368" stroke-width="1.6"/></svg>
<div class="a" style="left:1168px;top:990px;width:1px;height:43px;background:#dadce0"></div>
<svg style="left:1187px;top:1003px" width="13" height="16" viewBox="0 0 13 16"><path d="M0.5 0.5h8l4 4v11h-12z" fill="#fff" stroke="#777" stroke-width="0.9"/><path d="M8.5 0.5v4h4" fill="none" stroke="#777" stroke-width="0.9"/><rect x="2.5" y="6.5" width="7" height="6" fill="#1a5fb4"/><path d="M2.5 12.5l3-3 2 2 2-1.5v2.5z" fill="#4fa3e0"/></svg>
<div class="t" style="left:1216px;top:1005px;font-size:13px;color:#3c4043;letter-spacing:-0.1px">WhatsApp Image....jpeg</div>
<svg style="left:1372px;top:1008px" width="12" height="8"><path d="M1 7l5-5 5 5" fill="none" stroke="#5f6368" stroke-width="1.6"/></svg>
<div class="a" style="left:1401px;top:990px;width:1px;height:43px;background:#dadce0"></div>
<svg style="left:1420px;top:1003px" width="13" height="16" viewBox="0 0 13 16"><path d="M0.5 0.5h8l4 4v11h-12z" fill="#fff" stroke="#777" stroke-width="0.9"/><path d="M8.5 0.5v4h4" fill="none" stroke="#777" stroke-width="0.9"/><rect x="2.5" y="6.5" width="7" height="6" fill="#1a5fb4"/><path d="M2.5 12.5l3-3 2 2 2-1.5v2.5z" fill="#4fa3e0"/></svg>
<div class="t" style="left:1449px;top:1005px;font-size:13px;color:#3c4043;letter-spacing:-0.1px">WhatsApp Image....jpeg</div>
<svg style="left:1605px;top:1008px" width="12" height="8"><path d="M1 7l5-5 5 5" fill="none" stroke="#5f6368" stroke-width="1.6"/></svg>
<div class="a" style="left:1634px;top:990px;width:1px;height:43px;background:#dadce0"></div>

<div class="a" style="left:1779px;top:995px;width:105px;height:32px;border-radius:4px;border:1px solid #dadce0;background:#fff"></div>
<div class="t" style="left:1794px;top:1004px;font-size:12.5px;color:#1a73e8">Показать все</div>
<svg style="left:1897px;top:1006px" width="11" height="11"><path d="M1 1l9 9M10 1l-9 9" stroke="#5f6368" stroke-width="1.7"/></svg>
<!-- ===== TASKBAR ===== -->
<div class="a" style="left:0;top:1040px;width:1920px;height:40px;background:linear-gradient(90deg,#3a332e 0%,#2a2623 30%,#1f1e1d 50%,#262321 75%,#3a332f 100%)"></div>
<svg style="left:16px;top:1052px" width="16" height="16"><rect x="0" y="0.8" width="7.2" height="6.6" fill="#fff"/><rect x="8.3" y="0" width="7.7" height="7.4" fill="#fff"/><rect x="0" y="8.6" width="7.2" height="6.6" fill="#fff"/><rect x="8.3" y="8.6" width="7.7" height="7.4" fill="#fff"/></svg>
<div class="a" style="left:48px;top:1040px;width:344px;height:40px;background:#f0f0f0"></div>
<svg style="left:60px;top:1052px" width="17" height="17"><circle cx="10.5" cy="6.5" r="5.2" fill="none" stroke="#222" stroke-width="1.5"/><path d="M6.8 10.2L1 16" stroke="#222" stroke-width="1.7"/></svg>
<div class="t" style="left:88px;top:1053px;font-size:14.6px;color:#222">Введите здесь текст для поиска</div>
<svg style="left:407px;top:1052px" width="17" height="16"><path d="M1 1.5h12M1 14.5h12M3 4.5h8v7H3z M15.5 0.5v4M15.5 6v9" fill="none" stroke="#fff" stroke-width="1.3"/></svg>
<svg style="left:455px;top:1048px" width="24" height="24" viewBox="0 0 24 24"><rect width="24" height="24" fill="#5aa83c"/><path d="M4 3l8 16M12 3c4 2 7 6 8 12M8 3c2 4 4 10 4 16" stroke="#a8e08a" stroke-width="1.3" fill="none"/><path d="M3 4l7 15-2 2z" fill="#fff"/></svg>
<svg style="left:505px;top:1051px" width="22" height="18" viewBox="0 0 22 18"><path d="M0 1h8l2 2h12v15H0z" fill="#e6a728"/><rect x="0" y="5" width="22" height="13" fill="#f8ce5a"/><path d="M6 18v-6h10v6h-3v-3h-4v3z" fill="#1e7fd8"/></svg>
<div class="a" style="left:496px;top:1078px;width:40px;height:2px;background:#76b9ed"></div>
<svg style="left:553px;top:1048px" width="24" height="24" viewBox="0 0 24 24"><rect x="9" y="3" width="14" height="18" fill="#fff" stroke="#d24726" stroke-width="1"/><path d="M13 8h8M13 11h8M13 14h8" stroke="#d24726" stroke-width="1.2"/><path d="M0 2.5L14 0v24L0 21.5z" fill="#d24726"/><text x="2.2" y="16.5" font-size="11" font-weight="bold" fill="#fff" font-family="Liberation Sans">P</text></svg>
<div class="a" style="left:545px;top:1078px;width:40px;height:2px;background:#76b9ed"></div>
<svg style="left:602px;top:1048px" width="24" height="24" viewBox="0 0 24 24"><rect x="9" y="3" width="14" height="18" fill="#fff" stroke="#1d7044" stroke-width="1"/><path d="M13 7h8M13 10h8M13 13h8M13 16h8M16 4v16" stroke="#1d7044" stroke-width="1"/><path d="M0 2.5L14 0v24L0 21.5z" fill="#1d7044"/><text x="2.2" y="16.5" font-size="11" font-weight="bold" fill="#fff" font-family="Liberation Sans">X</text></svg>
<div class="a" style="left:639px;top:1040px;width:48px;height:40px;background:#3c3c3c"></div>
<svg style="left:652px;top:1049px" width="22" height="22" viewBox="0 0 22 22"><circle cx="11" cy="11" r="11" fill="#db4437"/><path d="M11 11L1.5 5.5A11 11 0 0 0 11 22z" fill="#0f9d58"/><path d="M11 11l9.5-5.5A11 11 0 0 1 11 22z" fill="#ffcd40"/><path d="M11 5.5h9.5A11 11 0 0 1 14 21.5L11 11z" fill="#ffcd40"/><path d="M11 11L6.2 13.8 1.5 5.5A11 11 0 0 0 8 21.6z" fill="#0f9d58"/><circle cx="11" cy="11" r="5" fill="#fff"/><circle cx="11" cy="11" r="4" fill="#4285f4"/></svg>
<div class="a" style="left:639px;top:1078px;width:48px;height:2px;background:#76b9ed"></div>
<svg style="left:700px;top:1048px" width="24" height="24" viewBox="0 0 24 24"><rect x="9" y="3" width="14" height="18" fill="#fff" stroke="#2b579a" stroke-width="1"/><path d="M13 7h8M13 10h8M13 13h8M13 16h8" stroke="#2b579a" stroke-width="1.2"/><path d="M0 2.5L14 0v24L0 21.5z" fill="#2b579a"/><text x="0.8" y="16" font-size="10" font-weight="bold" fill="#fff" font-family="Liberation Sans">W</text></svg>
<div class="a" style="left:692px;top:1078px;width:40px;height:2px;background:#76b9ed"></div>
<svg style="left:1644px;top:1048px" width="24" height="24"><rect width="24" height="24" fill="#1ba1e2"/><path d="M8 4v14h9" fill="none" stroke="#fff" stroke-width="3.2"/><path d="M6 20l4-3h8" fill="none" stroke="#0a3a8a" stroke-width="1.5"/></svg>
<svg style="left:1675px;top:1056px" width="14" height="9"><path d="M1 8l6-6 6 6" fill="none" stroke="#fff" stroke-width="1.4"/></svg>
<svg style="left:1697px;top:1053px" width="17" height="14"><path d="M1 5h3l4-3.5v11L4 9H1z" fill="none" stroke="#fff" stroke-width="1.1"/><path d="M10 4.5a3 3 0 0 1 0 5M12 3a5 5 0 0 1 0 8M14 1.5a7 7 0 0 1 0 11" fill="none" stroke="#fff" stroke-width="1.1"/></svg>
<svg style="left:1722px;top:1051px" width="12" height="18"><rect x="2.5" y="0.5" width="7" height="11" rx="3.5" fill="#fff"/><path d="M1 8a5 5 0 0 0 10 0M6 13v3M3 16.5h6" fill="none" stroke="#fff" stroke-width="1.2"/></svg>
<svg style="left:1745px;top:1053px" width="18" height="15"><rect x="4.5" y="2.5" width="13" height="8" fill="none" stroke="#fff" stroke-width="1.1"/><path d="M11 10.5v2.5M7.5 13.5h7M0.5 1v8M0.5 1h3v3h-3" fill="none" stroke="#fff" stroke-width="1.1"/></svg>
<div class="t" style="left:1772px;top:1053px;font-size:13px;color:#fff">ҚАЗ</div>
<div class="t" style="left:1821px;top:1047px;font-size:12.5px;color:#fff">10:51</div>
<div class="t" style="left:1807px;top:1063px;font-size:12.5px;color:#fff;letter-spacing:-0.3px">22.05.2021</div>
<svg style="left:1878px;top:1051px" width="26" height="24" viewBox="0 0 26 24"><path d="M1 1h16v11H7l-4 4v-4H1z" fill="#fff"/><path d="M4 4.5h10M4 7.5h10" stroke="#333" stroke-width="1"/><circle cx="17.5" cy="16.5" r="6.5" fill="#2a2623" stroke="#aaa" stroke-width="1"/><text x="14.3" y="20.5" font-size="10" fill="#fff" font-family="Liberation Sans">3</text></svg>
<div class="a" style="left:1916px;top:1040px;width:1px;height:40px;background:#777"></div>
<!-- ===== TOAST ===== -->
<div class="a" style="left:770px;top:812px;width:252px;height:85px;border-radius:4px;background:#202124;box-shadow:0 4px 10px rgba(0,0,0,0.28)"></div>
<svg style="left:887px;top:896px" width="18" height="10"><path d="M0 0h18L9 9z" fill="#202124"/></svg>
<svg style="left:1001px;top:822px" width="10" height="10"><path d="M1 1l8 8M9 1l-8 8" stroke="#fff" stroke-width="1.5"/></svg>
<div class="t" style="left:789px;top:833px;font-size:12.5px;line-height:15px;color:#fff;font-weight:bold;white-space:normal;width:225px;letter-spacing:-0.25px">Микрофон выключен. Чтобы включить его, нажмите на значок микрофона.</div>
</body></html>
